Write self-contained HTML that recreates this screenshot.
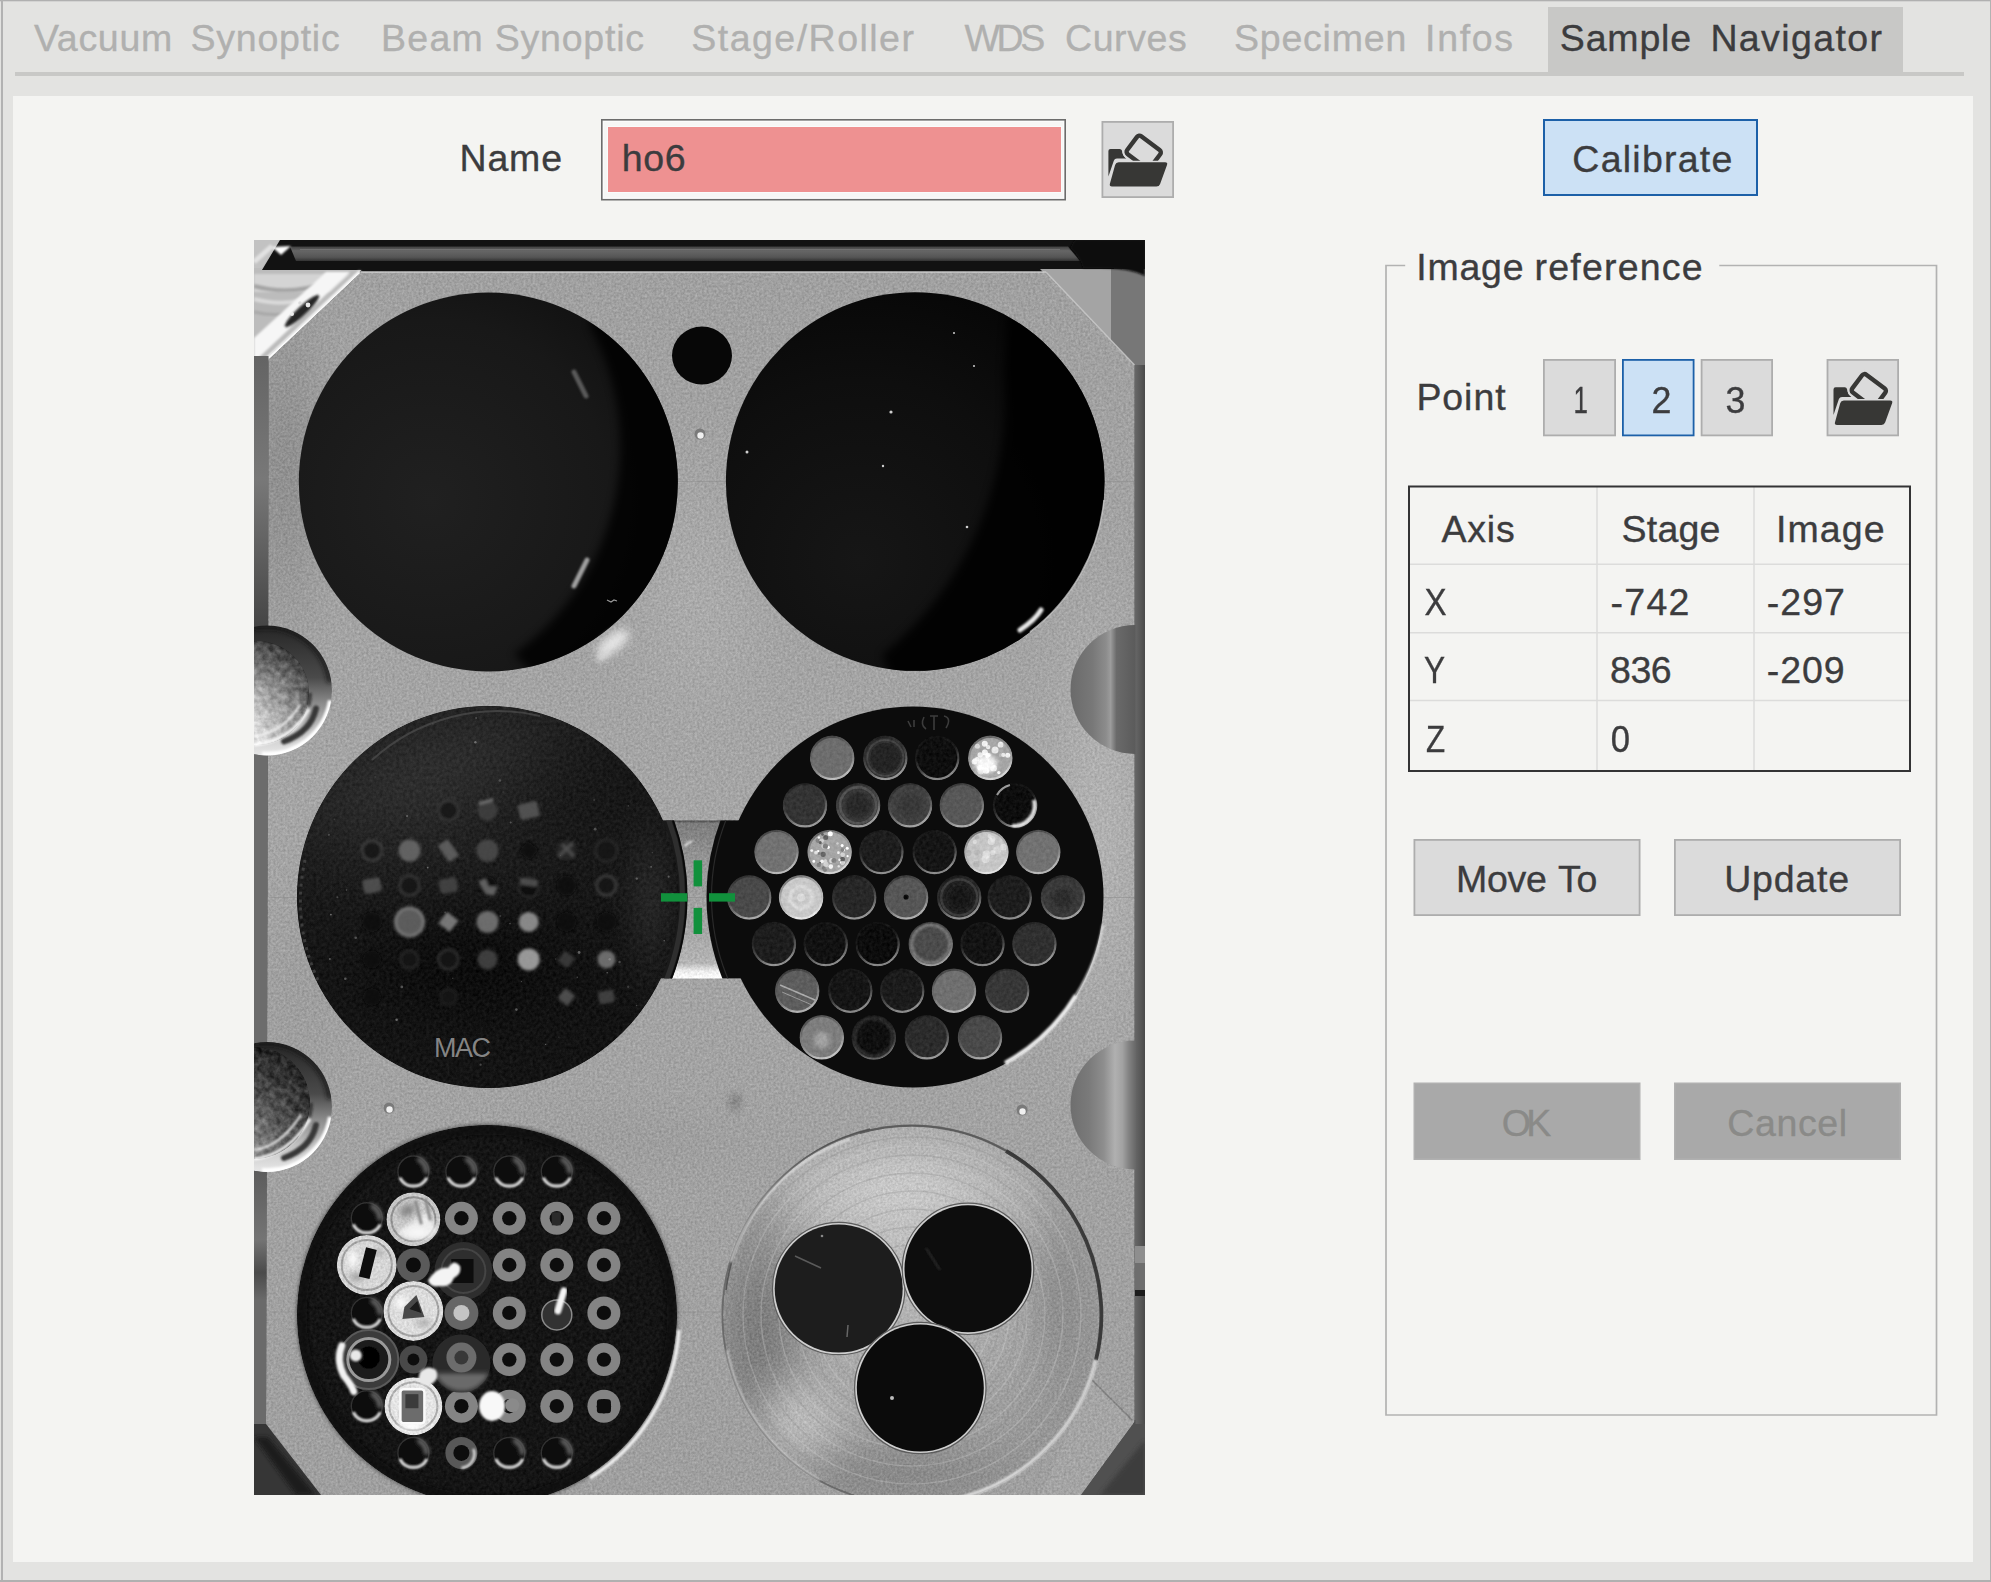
<!DOCTYPE html>
<html lang="en"><head><meta charset="utf-8"><title>Sample Navigator</title>
<style>
html,body{margin:0;padding:0;width:1991px;height:1582px;overflow:hidden;background:#e3e3e1}
#ui{position:absolute;left:0;top:0;width:1991px;height:1582px}
.t{position:absolute;font:37.5px/37.5px "Liberation Sans",sans-serif;white-space:pre;-webkit-text-stroke:.35px currentColor}
#photo{position:absolute;left:254px;top:240px;width:891px;height:1255px}
</style></head><body>
<svg id="ui" viewBox="0 0 1991 1582" width="1991" height="1582">
<rect x="0.00" y="0.00" width="1991.00" height="1582.00" fill="#e3e3e1"/>
<rect x="0.00" y="0.00" width="1991.00" height="1.30" fill="#b0b0b0"/>
<rect x="1.00" y="0.00" width="2.00" height="1582.00" fill="#b2b2b2"/>
<rect x="1990.00" y="0.00" width="1.00" height="1582.00" fill="#b2b2b2"/>
<rect x="0.00" y="1580.00" width="1991.00" height="2.00" fill="#b0b0b0"/>
<rect x="15.00" y="72.00" width="1949.00" height="4.00" fill="#c8c8c6"/>
<rect x="1548.00" y="7.00" width="355.00" height="69.00" fill="#c8c8c6"/>
<rect x="13.00" y="96.00" width="1960.00" height="1466.00" fill="#f4f4f2"/>
<rect x="601.80" y="119.80" width="463.40" height="79.90" fill="#f6f6f5" stroke="#6c6c6c" stroke-width="1.6"/>
<rect x="603.50" y="121.50" width="460.00" height="76.50" fill="none" stroke="#fbfbfb" stroke-width="1"/>
<rect x="607.00" y="126.00" width="455.00" height="67.00" fill="#f9fbfb"/>
<rect x="608.00" y="127.00" width="453.00" height="65.00" fill="#ee9191"/>
<rect x="1102.40" y="121.90" width="70.70" height="75.20" fill="#dbdbdb" stroke="#adadad" stroke-width="1.8"/>
<g transform="translate(1101.50,121.00)">
<path d="M6.9 30q0-2.1 2.1-2.1h9.2q1.7 0 2.2 1.6l1.2 4q.6 2 2.4 3.2l1 .8h-9.6q-2.3 0-3.1 2.2l-5.4 15.8z" fill="#373735"/>
<g transform="translate(36.9,10.4) rotate(36.9)" fill="none">
<rect x="2.2" y="2.2" width="29" height="22.4" rx="3" stroke="#dbdbdb" stroke-width="8.6"/>
<rect x="2.2" y="2.2" width="29" height="22.4" rx="3" stroke="#373735" stroke-width="4.4"/>
</g>
<path d="M17.2 41.2h46.4q2.9 0 1.9 2.7l-6.9 19q-.9 2.6-3.7 2.6h-44.4q-2.9 0-2.1-2.7l5.2-18.9q.8-2.7 3.6-2.7z" fill="#373735" stroke="#dbdbdb" stroke-width="3" paint-order="stroke"/>
</g>
<rect x="1544.00" y="120.00" width="213.00" height="75.00" fill="#cce1f5" stroke="#1c60a8" stroke-width="2"/>
<rect x="1543.90" y="359.90" width="71.20" height="75.50" fill="#dbdbdb" stroke="#adadad" stroke-width="1.8"/>
<rect x="1622.90" y="359.90" width="70.70" height="75.50" fill="#cce1f5" stroke="#1c60a8" stroke-width="1.8"/>
<rect x="1701.60" y="359.90" width="70.50" height="75.50" fill="#dbdbdb" stroke="#adadad" stroke-width="1.8"/>
<rect x="1827.50" y="359.90" width="70.60" height="75.50" fill="#dbdbdb" stroke="#adadad" stroke-width="1.8"/>
<g transform="translate(1826.60,359.40)">
<path d="M6.9 30q0-2.1 2.1-2.1h9.2q1.7 0 2.2 1.6l1.2 4q.6 2 2.4 3.2l1 .8h-9.6q-2.3 0-3.1 2.2l-5.4 15.8z" fill="#373735"/>
<g transform="translate(36.9,10.4) rotate(36.9)" fill="none">
<rect x="2.2" y="2.2" width="29" height="22.4" rx="3" stroke="#dbdbdb" stroke-width="8.6"/>
<rect x="2.2" y="2.2" width="29" height="22.4" rx="3" stroke="#373735" stroke-width="4.4"/>
</g>
<path d="M17.2 41.2h46.4q2.9 0 1.9 2.7l-6.9 19q-.9 2.6-3.7 2.6h-44.4q-2.9 0-2.1-2.7l5.2-18.9q.8-2.7 3.6-2.7z" fill="#373735" stroke="#dbdbdb" stroke-width="3" paint-order="stroke"/>
</g>
<rect x="1414.40" y="839.90" width="225.20" height="75.20" fill="#dbdbdb" stroke="#adadad" stroke-width="1.8"/>
<rect x="1674.90" y="839.90" width="225.20" height="75.20" fill="#dbdbdb" stroke="#adadad" stroke-width="1.8"/>
<rect x="1414.25" y="1083.25" width="225.50" height="76.00" fill="#a9a9a9" stroke="#b0b0b0" stroke-width="1.5"/>
<rect x="1674.75" y="1083.25" width="225.50" height="76.00" fill="#a9a9a9" stroke="#b0b0b0" stroke-width="1.5"/>
<path d="M1405.2 265.5H1386V1415H1936.5V265.5H1719.3" fill="none" stroke="#b2b2b2" stroke-width="1.7"/>
<path d="M1597 487V771" stroke="#dcdcdb" stroke-width="1.5"/>
<path d="M1754 487V771" stroke="#dcdcdb" stroke-width="1.5"/>
<path d="M1409 564.3H1910" stroke="#dcdcdb" stroke-width="1.5"/>
<path d="M1409 632.8H1910" stroke="#dcdcdb" stroke-width="1.5"/>
<path d="M1409 700.6H1910" stroke="#dcdcdb" stroke-width="1.5"/>
<rect x="1409.00" y="486.50" width="501.00" height="284.50" fill="none" stroke="#333335" stroke-width="2"/>
</svg>
<svg id="photo" viewBox="254 240 891 1255" width="891" height="1255">
<defs><filter id="grain" x="0" y="0" width="100%" height="100%" color-interpolation-filters="sRGB">
<feTurbulence type="fractalNoise" baseFrequency="0.42" numOctaves="2" seed="4" result="n"/>
<feColorMatrix in="n" type="matrix" values="1 0 0 0 0 1 0 0 0 0 1 0 0 0 0 0 0 0 0 1" result="gn"/>
<feComposite in="SourceGraphic" in2="gn" operator="arithmetic" k1="0" k2="1" k3="0.20" k4="-0.10" result="c"/>
<feComposite in="c" in2="SourceGraphic" operator="in"/>
</filter>
<filter id="grain2" x="0" y="0" width="100%" height="100%" color-interpolation-filters="sRGB">
<feTurbulence type="fractalNoise" baseFrequency="0.3" numOctaves="3" seed="9" result="n"/>
<feColorMatrix in="n" type="matrix" values="1 0 0 0 0 1 0 0 0 0 1 0 0 0 0 0 0 0 0 1" result="gn"/>
<feComposite in="SourceGraphic" in2="gn" operator="arithmetic" k1="0" k2="1" k3="0.12" k4="-0.055" result="c"/>
<feComposite in="c" in2="SourceGraphic" operator="in"/>
</filter>
<filter id="b1" x="-50%" y="-50%" width="200%" height="200%"><feGaussianBlur stdDeviation="1"/></filter>
<filter id="b06" x="-5%" y="-5%" width="110%" height="110%"><feGaussianBlur stdDeviation="0.6"/></filter>
<filter id="b15" x="-50%" y="-50%" width="200%" height="200%"><feGaussianBlur stdDeviation="1.5"/></filter>
<filter id="b2" x="-50%" y="-50%" width="200%" height="200%"><feGaussianBlur stdDeviation="2"/></filter>
<filter id="b4" x="-50%" y="-50%" width="200%" height="200%"><feGaussianBlur stdDeviation="4"/></filter>
<filter id="b8" x="-100%" y="-100%" width="300%" height="300%"><feGaussianBlur stdDeviation="8"/></filter>
<filter id="b16" x="-150%" y="-150%" width="400%" height="400%"><feGaussianBlur stdDeviation="16"/></filter>
<linearGradient id="plateG" x1="0" y1="0" x2="0" y2="1">
<stop offset="0" stop-color="#a0a0a0"/><stop offset="0.45" stop-color="#a5a5a5"/><stop offset="1" stop-color="#9f9f9f"/></linearGradient>
<linearGradient id="lstrip" x1="0" y1="358" x2="0" y2="1424" gradientUnits="userSpaceOnUse">
<stop offset="0" stop-color="#646464"/><stop offset="0.114" stop-color="#787878"/><stop offset="0.19" stop-color="#5c5c5c"/><stop offset="0.25" stop-color="#464646"/>
<stop offset="0.373" stop-color="#6c6c6c"/><stop offset="0.64" stop-color="#6c6c6c"/><stop offset="0.762" stop-color="#5c5c5c"/><stop offset="0.827" stop-color="#747474"/>
<stop offset="0.858" stop-color="#4a4a4a"/><stop offset="0.884" stop-color="#6a6a6a"/><stop offset="1" stop-color="#6a6a6a"/></linearGradient>
<linearGradient id="rimG" x1="0" y1="0" x2="0.35" y2="1">
<stop offset="0" stop-color="#000" stop-opacity=".55"/><stop offset="0.45" stop-color="#444" stop-opacity=".2"/><stop offset="1" stop-color="#fff" stop-opacity=".5"/></linearGradient>
<linearGradient id="slotG" x1="0" y1="820" x2="0" y2="979" gradientUnits="userSpaceOnUse">
<stop offset="0" stop-color="#404040"/><stop offset="0.02" stop-color="#7c7c7c"/><stop offset="0.3" stop-color="#9a9a9a"/><stop offset="0.7" stop-color="#a6a6a6"/><stop offset="0.9" stop-color="#b4b4b4"/><stop offset="0.95" stop-color="#ececec"/><stop offset="1" stop-color="#ffffff"/></linearGradient>
<linearGradient id="notchG" x1="0" y1="0" x2="0" y2="1">
<stop offset="0" stop-color="#262626"/><stop offset="0.4" stop-color="#4a4a4a"/><stop offset="0.6" stop-color="#8c8c8c"/><stop offset="0.8" stop-color="#c4c4c4"/><stop offset="1" stop-color="#e8e8e8"/></linearGradient>
<radialGradient id="headG0" cx="0.22" cy="0.98" r="1.15">
<stop offset="0" stop-color="#ffffff"/><stop offset="0.2" stop-color="#ececec"/><stop offset="0.4" stop-color="#bcbcbc"/><stop offset="0.6" stop-color="#909090"/><stop offset="0.8" stop-color="#5c5c5c"/><stop offset="0.92" stop-color="#383838"/><stop offset="1" stop-color="#2a2a2a"/></radialGradient>
<radialGradient id="headG1" cx="0.2" cy="1.0" r="1.15">
<stop offset="0" stop-color="#f4f4f4"/><stop offset="0.12" stop-color="#c8c8c8"/><stop offset="0.28" stop-color="#868686"/><stop offset="0.5" stop-color="#5c5c5c"/><stop offset="0.75" stop-color="#3a3a3a"/><stop offset="1" stop-color="#1c1c1c"/></radialGradient>
<filter id="grain3" x="0" y="0" width="100%" height="100%" color-interpolation-filters="sRGB">
<feTurbulence type="fractalNoise" baseFrequency="0.16" numOctaves="3" seed="21" result="n"/>
<feColorMatrix in="n" type="matrix" values="1 0 0 0 0 1 0 0 0 0 1 0 0 0 0 0 0 0 0 1" result="gn"/>
<feComposite in="SourceGraphic" in2="gn" operator="arithmetic" k1="0" k2="1" k3="0.36" k4="-0.18" result="c"/>
<feComposite in="c" in2="SourceGraphic" operator="in"/>
</filter>
<linearGradient id="rstrip" x1="1134" y1="0" x2="1145" y2="0" gradientUnits="userSpaceOnUse">
<stop offset="0" stop-color="#6a6a6a"/><stop offset="0.6" stop-color="#585858"/><stop offset="1" stop-color="#4a4a4a"/></linearGradient>
<linearGradient id="stripe" x1="0" y1="246" x2="0" y2="262" gradientUnits="userSpaceOnUse">
<stop offset="0" stop-color="#3a3a3a"/><stop offset="0.3" stop-color="#666"/><stop offset="0.7" stop-color="#555"/><stop offset="1" stop-color="#2a2a2a"/></linearGradient>
<linearGradient id="tl" x1="254" y1="300" x2="330" y2="350" gradientUnits="userSpaceOnUse">
<stop offset="0" stop-color="#c0c0c0"/><stop offset="0.45" stop-color="#d8d8d8"/><stop offset="0.7" stop-color="#ffffff"/><stop offset="1" stop-color="#e8e8e8"/></linearGradient>
<linearGradient id="cyl" x1="1070" y1="0" x2="1145" y2="0" gradientUnits="userSpaceOnUse">
<stop offset="0" stop-color="#6a6a6a"/><stop offset="0.3" stop-color="#787878"/><stop offset="0.48" stop-color="#8c8c8c"/><stop offset="0.54" stop-color="#9c9c9c"/><stop offset="0.62" stop-color="#6a6a6a"/><stop offset="0.85" stop-color="#5c5c5c"/><stop offset="1" stop-color="#555"/></linearGradient>
<linearGradient id="cyl2" x1="1070" y1="0" x2="1145" y2="0" gradientUnits="userSpaceOnUse">
<stop offset="0" stop-color="#6e6e6e"/><stop offset="0.25" stop-color="#7a7a7a"/><stop offset="0.45" stop-color="#8e8e8e"/><stop offset="0.6" stop-color="#b0b0b0"/><stop offset="0.7" stop-color="#a2a2a2"/><stop offset="0.78" stop-color="#848484"/><stop offset="0.86" stop-color="#6c6c6c"/><stop offset="1" stop-color="#5c5c5c"/></linearGradient>
<radialGradient id="hole1" cx="430" cy="500" r="300" gradientUnits="userSpaceOnUse">
<stop offset="0" stop-color="#202020"/><stop offset="0.6" stop-color="#181818"/><stop offset="1" stop-color="#0c0c0c"/></radialGradient>
<radialGradient id="hole2" cx="860" cy="560" r="300" gradientUnits="userSpaceOnUse">
<stop offset="0" stop-color="#161616"/><stop offset="0.6" stop-color="#0e0e0e"/><stop offset="1" stop-color="#060606"/></radialGradient>
<radialGradient id="disk3" cx="420" cy="800" r="330" gradientUnits="userSpaceOnUse">
<stop offset="0" stop-color="#222222"/><stop offset="0.45" stop-color="#181818"/><stop offset="1" stop-color="#111111"/></radialGradient>
<radialGradient id="metal" cx="900" cy="1240" r="230" gradientUnits="userSpaceOnUse">
<stop offset="0" stop-color="#bcbcbc"/><stop offset="0.5" stop-color="#acacac"/><stop offset="0.8" stop-color="#a0a0a0"/><stop offset="1" stop-color="#989898"/></radialGradient>
<radialGradient id="screwA" cx="0.3" cy="0.85" r="0.95">
<stop offset="0" stop-color="#ffffff"/><stop offset="0.2" stop-color="#d0d0d0"/><stop offset="0.5" stop-color="#8a8a8a"/><stop offset="0.8" stop-color="#5a5a5a"/><stop offset="1" stop-color="#303030"/></radialGradient>
<radialGradient id="screwB" cx="0.3" cy="0.35" r="0.9">
<stop offset="0" stop-color="#8a8a8a"/><stop offset="0.5" stop-color="#5e5e5e"/><stop offset="1" stop-color="#2c2c2c"/></radialGradient>
<clipPath id="pc"><rect x="254" y="240" width="891" height="1255"/></clipPath>
<clipPath id="plateclip"><path d="M361.5 271.5H1046L1134.5 365V1422L1081 1495H321L266 1424L269 359Z"/></clipPath>
<clipPath id="slotL"><rect x="640" y="820.5" width="57" height="158"/></clipPath>
<clipPath id="slotR"><rect x="698" y="820.5" width="60" height="158"/></clipPath>
<clipPath id="h5"><circle cx="487" cy="1315" r="190"/></clipPath>
<clipPath id="h4"><circle cx="913" cy="897" r="190.5"/></clipPath>
<clipPath id="h1"><circle cx="488.3" cy="482" r="189.5"/></clipPath>
<clipPath id="h2"><circle cx="915.2" cy="481.5" r="189.3"/></clipPath>
<clipPath id="h3"><circle cx="488" cy="897" r="191"/></clipPath>
<radialGradient id="sg1"><stop offset="0" stop-color="#adadad" stop-opacity="0.700"/><stop offset="0.15" stop-color="#adadad" stop-opacity="0.649"/><stop offset="0.3" stop-color="#adadad" stop-opacity="0.517"/><stop offset="0.45" stop-color="#adadad" stop-opacity="0.352"/><stop offset="0.6" stop-color="#adadad" stop-opacity="0.201"/><stop offset="0.75" stop-color="#adadad" stop-opacity="0.091"/><stop offset="0.9" stop-color="#adadad" stop-opacity="0.025"/><stop offset="1" stop-color="#adadad" stop-opacity="0.000"/></radialGradient>
<radialGradient id="sg2"><stop offset="0" stop-color="#9a9a9a" stop-opacity="0.500"/><stop offset="0.15" stop-color="#9a9a9a" stop-opacity="0.464"/><stop offset="0.3" stop-color="#9a9a9a" stop-opacity="0.370"/><stop offset="0.45" stop-color="#9a9a9a" stop-opacity="0.251"/><stop offset="0.6" stop-color="#9a9a9a" stop-opacity="0.143"/><stop offset="0.75" stop-color="#9a9a9a" stop-opacity="0.065"/><stop offset="0.9" stop-color="#9a9a9a" stop-opacity="0.018"/><stop offset="1" stop-color="#9a9a9a" stop-opacity="0.000"/></radialGradient>
<radialGradient id="sg3"><stop offset="0" stop-color="#b6b6b6" stop-opacity="0.700"/><stop offset="0.15" stop-color="#b6b6b6" stop-opacity="0.649"/><stop offset="0.3" stop-color="#b6b6b6" stop-opacity="0.517"/><stop offset="0.45" stop-color="#b6b6b6" stop-opacity="0.352"/><stop offset="0.6" stop-color="#b6b6b6" stop-opacity="0.201"/><stop offset="0.75" stop-color="#b6b6b6" stop-opacity="0.091"/><stop offset="0.9" stop-color="#b6b6b6" stop-opacity="0.025"/><stop offset="1" stop-color="#b6b6b6" stop-opacity="0.000"/></radialGradient>
<radialGradient id="sg4"><stop offset="0" stop-color="#9a9a9a" stop-opacity="0.600"/><stop offset="0.15" stop-color="#9a9a9a" stop-opacity="0.557"/><stop offset="0.3" stop-color="#9a9a9a" stop-opacity="0.443"/><stop offset="0.45" stop-color="#9a9a9a" stop-opacity="0.302"/><stop offset="0.6" stop-color="#9a9a9a" stop-opacity="0.172"/><stop offset="0.75" stop-color="#9a9a9a" stop-opacity="0.078"/><stop offset="0.9" stop-color="#9a9a9a" stop-opacity="0.021"/><stop offset="1" stop-color="#9a9a9a" stop-opacity="0.000"/></radialGradient>
<radialGradient id="sg5"><stop offset="0" stop-color="#8a8a8a" stop-opacity="0.750"/><stop offset="0.15" stop-color="#8a8a8a" stop-opacity="0.696"/><stop offset="0.3" stop-color="#8a8a8a" stop-opacity="0.554"/><stop offset="0.45" stop-color="#8a8a8a" stop-opacity="0.377"/><stop offset="0.6" stop-color="#8a8a8a" stop-opacity="0.215"/><stop offset="0.75" stop-color="#8a8a8a" stop-opacity="0.097"/><stop offset="0.9" stop-color="#8a8a8a" stop-opacity="0.027"/><stop offset="1" stop-color="#8a8a8a" stop-opacity="0.000"/></radialGradient>
<radialGradient id="sg6"><stop offset="0" stop-color="#7c7c7c" stop-opacity="0.700"/><stop offset="0.15" stop-color="#7c7c7c" stop-opacity="0.649"/><stop offset="0.3" stop-color="#7c7c7c" stop-opacity="0.517"/><stop offset="0.45" stop-color="#7c7c7c" stop-opacity="0.352"/><stop offset="0.6" stop-color="#7c7c7c" stop-opacity="0.201"/><stop offset="0.75" stop-color="#7c7c7c" stop-opacity="0.091"/><stop offset="0.9" stop-color="#7c7c7c" stop-opacity="0.025"/><stop offset="1" stop-color="#7c7c7c" stop-opacity="0.000"/></radialGradient>
<clipPath id="nc0"><circle cx="267" cy="690.5" r="65"/></clipPath>
<clipPath id="nc1"><circle cx="267" cy="1107" r="65"/></clipPath>
<radialGradient id="sg7"><stop offset="0" stop-color="#303030" stop-opacity="0.750"/><stop offset="0.15" stop-color="#303030" stop-opacity="0.696"/><stop offset="0.3" stop-color="#303030" stop-opacity="0.554"/><stop offset="0.45" stop-color="#303030" stop-opacity="0.377"/><stop offset="0.6" stop-color="#303030" stop-opacity="0.215"/><stop offset="0.75" stop-color="#303030" stop-opacity="0.097"/><stop offset="0.9" stop-color="#303030" stop-opacity="0.027"/><stop offset="1" stop-color="#303030" stop-opacity="0.000"/></radialGradient>
<radialGradient id="sg8"><stop offset="0" stop-color="#090909" stop-opacity="0.850"/><stop offset="0.15" stop-color="#090909" stop-opacity="0.788"/><stop offset="0.3" stop-color="#090909" stop-opacity="0.628"/><stop offset="0.45" stop-color="#090909" stop-opacity="0.427"/><stop offset="0.6" stop-color="#090909" stop-opacity="0.244"/><stop offset="0.75" stop-color="#090909" stop-opacity="0.110"/><stop offset="0.9" stop-color="#090909" stop-opacity="0.030"/><stop offset="1" stop-color="#090909" stop-opacity="0.000"/></radialGradient>
<radialGradient id="sg9"><stop offset="0" stop-color="#2a2a2a" stop-opacity="0.700"/><stop offset="0.15" stop-color="#2a2a2a" stop-opacity="0.649"/><stop offset="0.3" stop-color="#2a2a2a" stop-opacity="0.517"/><stop offset="0.45" stop-color="#2a2a2a" stop-opacity="0.352"/><stop offset="0.6" stop-color="#2a2a2a" stop-opacity="0.201"/><stop offset="0.75" stop-color="#2a2a2a" stop-opacity="0.091"/><stop offset="0.9" stop-color="#2a2a2a" stop-opacity="0.025"/><stop offset="1" stop-color="#2a2a2a" stop-opacity="0.000"/></radialGradient>
<radialGradient id="sg10"><stop offset="0" stop-color="#7a7a7a" stop-opacity="0.800"/><stop offset="0.15" stop-color="#7a7a7a" stop-opacity="0.742"/><stop offset="0.3" stop-color="#7a7a7a" stop-opacity="0.591"/><stop offset="0.45" stop-color="#7a7a7a" stop-opacity="0.402"/><stop offset="0.6" stop-color="#7a7a7a" stop-opacity="0.230"/><stop offset="0.75" stop-color="#7a7a7a" stop-opacity="0.104"/><stop offset="0.9" stop-color="#7a7a7a" stop-opacity="0.028"/><stop offset="1" stop-color="#7a7a7a" stop-opacity="0.000"/></radialGradient>
<radialGradient id="sg11"><stop offset="0" stop-color="#ffffff" stop-opacity="0.900"/><stop offset="0.15" stop-color="#ffffff" stop-opacity="0.835"/><stop offset="0.3" stop-color="#ffffff" stop-opacity="0.665"/><stop offset="0.45" stop-color="#ffffff" stop-opacity="0.453"/><stop offset="0.6" stop-color="#ffffff" stop-opacity="0.258"/><stop offset="0.75" stop-color="#ffffff" stop-opacity="0.117"/><stop offset="0.9" stop-color="#ffffff" stop-opacity="0.032"/><stop offset="1" stop-color="#ffffff" stop-opacity="0.000"/></radialGradient>
<radialGradient id="sg12"><stop offset="0" stop-color="#9a9a9a" stop-opacity="0.700"/><stop offset="0.15" stop-color="#9a9a9a" stop-opacity="0.649"/><stop offset="0.3" stop-color="#9a9a9a" stop-opacity="0.517"/><stop offset="0.45" stop-color="#9a9a9a" stop-opacity="0.352"/><stop offset="0.6" stop-color="#9a9a9a" stop-opacity="0.201"/><stop offset="0.75" stop-color="#9a9a9a" stop-opacity="0.091"/><stop offset="0.9" stop-color="#9a9a9a" stop-opacity="0.025"/><stop offset="1" stop-color="#9a9a9a" stop-opacity="0.000"/></radialGradient>
<radialGradient id="sg13"><stop offset="0" stop-color="#a8a8a8" stop-opacity="0.600"/><stop offset="0.15" stop-color="#a8a8a8" stop-opacity="0.557"/><stop offset="0.3" stop-color="#a8a8a8" stop-opacity="0.443"/><stop offset="0.45" stop-color="#a8a8a8" stop-opacity="0.302"/><stop offset="0.6" stop-color="#a8a8a8" stop-opacity="0.172"/><stop offset="0.75" stop-color="#a8a8a8" stop-opacity="0.078"/><stop offset="0.9" stop-color="#a8a8a8" stop-opacity="0.021"/><stop offset="1" stop-color="#a8a8a8" stop-opacity="0.000"/></radialGradient>
<radialGradient id="sg14"><stop offset="0" stop-color="#ffffff" stop-opacity="0.800"/><stop offset="0.15" stop-color="#ffffff" stop-opacity="0.742"/><stop offset="0.3" stop-color="#ffffff" stop-opacity="0.591"/><stop offset="0.45" stop-color="#ffffff" stop-opacity="0.402"/><stop offset="0.6" stop-color="#ffffff" stop-opacity="0.230"/><stop offset="0.75" stop-color="#ffffff" stop-opacity="0.104"/><stop offset="0.9" stop-color="#ffffff" stop-opacity="0.028"/><stop offset="1" stop-color="#ffffff" stop-opacity="0.000"/></radialGradient>
<radialGradient id="sg15"><stop offset="0" stop-color="#a0a0a0" stop-opacity="0.600"/><stop offset="0.15" stop-color="#a0a0a0" stop-opacity="0.557"/><stop offset="0.3" stop-color="#a0a0a0" stop-opacity="0.443"/><stop offset="0.45" stop-color="#a0a0a0" stop-opacity="0.302"/><stop offset="0.6" stop-color="#a0a0a0" stop-opacity="0.172"/><stop offset="0.75" stop-color="#a0a0a0" stop-opacity="0.078"/><stop offset="0.9" stop-color="#a0a0a0" stop-opacity="0.021"/><stop offset="1" stop-color="#a0a0a0" stop-opacity="0.000"/></radialGradient>
<radialGradient id="sg16"><stop offset="0" stop-color="#ffffff" stop-opacity="0.800"/><stop offset="0.15" stop-color="#ffffff" stop-opacity="0.742"/><stop offset="0.3" stop-color="#ffffff" stop-opacity="0.591"/><stop offset="0.45" stop-color="#ffffff" stop-opacity="0.402"/><stop offset="0.6" stop-color="#ffffff" stop-opacity="0.230"/><stop offset="0.75" stop-color="#ffffff" stop-opacity="0.104"/><stop offset="0.9" stop-color="#ffffff" stop-opacity="0.028"/><stop offset="1" stop-color="#ffffff" stop-opacity="0.000"/></radialGradient>
<radialGradient id="sg17"><stop offset="0" stop-color="#ffffff" stop-opacity="0.900"/><stop offset="0.15" stop-color="#ffffff" stop-opacity="0.835"/><stop offset="0.3" stop-color="#ffffff" stop-opacity="0.665"/><stop offset="0.45" stop-color="#ffffff" stop-opacity="0.453"/><stop offset="0.6" stop-color="#ffffff" stop-opacity="0.258"/><stop offset="0.75" stop-color="#ffffff" stop-opacity="0.117"/><stop offset="0.9" stop-color="#ffffff" stop-opacity="0.032"/><stop offset="1" stop-color="#ffffff" stop-opacity="0.000"/></radialGradient>
<radialGradient id="sg18"><stop offset="0" stop-color="#787878" stop-opacity="0.900"/><stop offset="0.15" stop-color="#787878" stop-opacity="0.835"/><stop offset="0.3" stop-color="#787878" stop-opacity="0.665"/><stop offset="0.45" stop-color="#787878" stop-opacity="0.453"/><stop offset="0.6" stop-color="#787878" stop-opacity="0.258"/><stop offset="0.75" stop-color="#787878" stop-opacity="0.117"/><stop offset="0.9" stop-color="#787878" stop-opacity="0.032"/><stop offset="1" stop-color="#787878" stop-opacity="0.000"/></radialGradient>
<radialGradient id="sg19"><stop offset="0" stop-color="#868686" stop-opacity="0.800"/><stop offset="0.15" stop-color="#868686" stop-opacity="0.742"/><stop offset="0.3" stop-color="#868686" stop-opacity="0.591"/><stop offset="0.45" stop-color="#868686" stop-opacity="0.402"/><stop offset="0.6" stop-color="#868686" stop-opacity="0.230"/><stop offset="0.75" stop-color="#868686" stop-opacity="0.104"/><stop offset="0.9" stop-color="#868686" stop-opacity="0.028"/><stop offset="1" stop-color="#868686" stop-opacity="0.000"/></radialGradient>
<radialGradient id="sg20"><stop offset="0" stop-color="#8a8a8a" stop-opacity="0.800"/><stop offset="0.15" stop-color="#8a8a8a" stop-opacity="0.742"/><stop offset="0.3" stop-color="#8a8a8a" stop-opacity="0.591"/><stop offset="0.45" stop-color="#8a8a8a" stop-opacity="0.402"/><stop offset="0.6" stop-color="#8a8a8a" stop-opacity="0.230"/><stop offset="0.75" stop-color="#8a8a8a" stop-opacity="0.104"/><stop offset="0.9" stop-color="#8a8a8a" stop-opacity="0.028"/><stop offset="1" stop-color="#8a8a8a" stop-opacity="0.000"/></radialGradient>
<radialGradient id="sg21"><stop offset="0" stop-color="#cccccc" stop-opacity="0.800"/><stop offset="0.15" stop-color="#cccccc" stop-opacity="0.742"/><stop offset="0.3" stop-color="#cccccc" stop-opacity="0.591"/><stop offset="0.45" stop-color="#cccccc" stop-opacity="0.402"/><stop offset="0.6" stop-color="#cccccc" stop-opacity="0.230"/><stop offset="0.75" stop-color="#cccccc" stop-opacity="0.104"/><stop offset="0.9" stop-color="#cccccc" stop-opacity="0.028"/><stop offset="1" stop-color="#cccccc" stop-opacity="0.000"/></radialGradient>
<radialGradient id="sg22"><stop offset="0" stop-color="#c0c0c0" stop-opacity="0.800"/><stop offset="0.15" stop-color="#c0c0c0" stop-opacity="0.742"/><stop offset="0.3" stop-color="#c0c0c0" stop-opacity="0.591"/><stop offset="0.45" stop-color="#c0c0c0" stop-opacity="0.402"/><stop offset="0.6" stop-color="#c0c0c0" stop-opacity="0.230"/><stop offset="0.75" stop-color="#c0c0c0" stop-opacity="0.104"/><stop offset="0.9" stop-color="#c0c0c0" stop-opacity="0.028"/><stop offset="1" stop-color="#c0c0c0" stop-opacity="0.000"/></radialGradient></defs>
<rect x="254" y="240" width="891" height="1255" fill="#808080"/>
<rect x="254" y="240" width="891" height="33" fill="#121212"/>
<path d="M290 246.5H1068L1080 261H296Z" fill="url(#stripe)"/>
<path d="M300 249.5H1060" stroke="#7a7a7a" stroke-width="1.2" opacity=".7"/>
<path d="M254 240H280L262 270H361.5L268.5 356H254Z" fill="#bcbcbc"/>
<path d="M254 274H350L330 292H254Z" fill="#d4d4d4" filter="url(#b1)"/>
<path d="M254 286Q290 296 326 283" stroke="#a4a4a4" stroke-width="4" fill="none" filter="url(#b1)"/>
<path d="M254 299Q288 308 314 295" stroke="#dadada" stroke-width="4" fill="none" filter="url(#b1)"/>
<path d="M254 312Q280 318 300 310" stroke="#a8a8a8" stroke-width="3" fill="none" filter="url(#b1)"/>
<path d="M350 272L254 362V338L326 272Z" fill="#f6f6f6" filter="url(#b1)"/>
<path d="M361 272L268 359" stroke="#ffffff" stroke-width="5" filter="url(#b1)"/>
<path d="M254 240H279L262 268H254Z" fill="#c2c2c2"/>
<path d="M254 262L272 246" stroke="#e2e2e2" stroke-width="5" filter="url(#b1)"/>
<path d="M272 247L291 246L281 255Z" fill="#fff" filter="url(#b1)"/>
<ellipse cx="302" cy="311" rx="23" ry="4.6" transform="rotate(-43 302 311)" fill="#262626" filter="url(#b1)"/>
<circle cx="292" cy="314" r="2" fill="#eee"/><circle cx="308" cy="305" r="2.4" fill="#e8e8e8"/><circle cx="300" cy="303" r="1.8" fill="#ddd"/>
<path d="M1040 269H1145V366H1134.5Z" fill="#a4a4a4"/>
<path d="M1111 269H1145V366H1134.5L1111 341Z" fill="#777"/>
<path d="M1134.5 365V1424H1145V365Z" fill="url(#rstrip)"/>
<path d="M1075 240H1145V276Q1130 268 1100 268H1083Q1080 256 1070 248Z" fill="#0e0e0e" filter="url(#b1)"/>
<rect x="254" y="356" width="14.5" height="1081" fill="url(#lstrip)"/>
<path d="M254 1424H266L321 1495H254Z" fill="#363636"/>
<path d="M254 1437H268L316 1495H296Z" fill="#1e1e1e" filter="url(#b2)"/>
<path d="M1134.5 1420L1081 1495H1145V1420Z" fill="#505050"/>
<path d="M1145 1440L1100 1495H1145Z" fill="#3c3c3c" filter="url(#b2)"/>
<g filter="url(#grain)">
<path d="M361.5 271.5H1046L1134.5 365V1422L1081 1495H321L266 1424L269 359Z" fill="url(#plateG)"/>
<g clip-path="url(#plateclip)">
<ellipse cx="700" cy="600" rx="110" ry="200" fill="url(#sg1)"/>
<ellipse cx="640" cy="1140" rx="200" ry="60" fill="url(#sg2)"/>
<ellipse cx="1100" cy="820" rx="80" ry="330" fill="url(#sg3)"/>
<ellipse cx="300" cy="1000" rx="80" ry="180" fill="url(#sg4)"/>
<ellipse cx="285" cy="470" rx="70" ry="260" fill="url(#sg5)"/>
<ellipse cx="735" cy="1102" rx="14" ry="18" fill="url(#sg6)"/>
<path d="M1092 1380L1134.5 1422L1081 1495H1040Z" fill="#acacac" opacity=".4"/>
<path d="M1092 1380L1132 1420" stroke="#7c7c7c" stroke-width="1.6" opacity=".9"/>
</g>
<rect x="655" y="820.5" width="90" height="158" fill="url(#slotG)"/>
</g>
<path d="M659 820.8H741" stroke="#151515" stroke-width="2.2" filter="url(#b1)"/>
<path d="M697.5 880V915" stroke="#e0e0e0" stroke-width="3" filter="url(#b1)" opacity=".7"/>
<path d="M684 846l8-5" stroke="#eee" stroke-width="2" filter="url(#b1)"/>
<path d="M361 272H1046" stroke="#d8d8d8" stroke-width="1.6" opacity=".8"/>
<path d="M1046 272L1134.5 365" stroke="#cfcfcf" stroke-width="1.3" opacity=".8"/>
<path d="M269 481.5H1134" stroke="#8e8e8e" stroke-width="1" opacity=".55"/>
<path d="M269 897.5H1134" stroke="#8e8e8e" stroke-width="1" opacity=".55"/>
<path d="M269 1312H1134" stroke="#8e8e8e" stroke-width="1" opacity=".55"/>
<g clip-path="url(#pc)"><g clip-path="url(#nc0)">
<circle cx="267" cy="690.5" r="65" fill="url(#notchG)"/>
<g filter="url(#grain3)"><circle cx="257" cy="693" r="52" fill="url(#headG0)"/></g>
<circle cx="257" cy="693" r="53" fill="none" stroke="#181818" stroke-width="4" stroke-dasharray="99 600" stroke-dashoffset="86" opacity=".6" filter="url(#b1)"/>
<path d="M254 736Q283 733 300 705" stroke="#f4f4f4" stroke-width="2.5" fill="none" filter="url(#b1)" opacity=".8"/>
<path d="M254 745Q291 741 309 709" stroke="#ffffff" stroke-width="3" fill="none" filter="url(#b1)" opacity=".9"/>
<path d="M284 741.5Q311 731.5 316 708.5" stroke="#383838" stroke-width="6" stroke-linecap="round" fill="none" filter="url(#b1)"/>
<path d="M262 754.0A64 64 0 0 0 330.5 700.5" stroke="#ffffff" stroke-width="5" fill="none" filter="url(#b1)"/>
<path d="M254 627.5A64 64 0 0 1 330 682.5" stroke="#161616" stroke-width="6" fill="none" filter="url(#b2)" opacity=".7"/>
</g></g>
<g clip-path="url(#pc)"><g clip-path="url(#nc1)">
<circle cx="267" cy="1107" r="65" fill="url(#notchG)"/>
<g filter="url(#grain3)"><circle cx="254" cy="1103" r="56" fill="url(#headG1)"/></g>
<circle cx="254" cy="1103" r="57" fill="none" stroke="#181818" stroke-width="4" stroke-dasharray="106 600" stroke-dashoffset="92" opacity=".6" filter="url(#b1)"/>
<path d="M254 1150Q280 1147 301 1115" stroke="#f4f4f4" stroke-width="2.5" fill="none" filter="url(#b1)" opacity=".8"/>
<path d="M254 1159Q288 1155 310 1119" stroke="#ffffff" stroke-width="3" fill="none" filter="url(#b1)" opacity=".9"/>
<path d="M284 1158Q311 1148 316 1125" stroke="#383838" stroke-width="6" stroke-linecap="round" fill="none" filter="url(#b1)"/>
<path d="M262 1170.5A64 64 0 0 0 330.5 1117" stroke="#ffffff" stroke-width="5" fill="none" filter="url(#b1)"/>
<path d="M254 1044A64 64 0 0 1 330 1099" stroke="#161616" stroke-width="6" fill="none" filter="url(#b2)" opacity=".7"/>
</g></g>
<g clip-path="url(#pc)"><circle cx="1135" cy="689.5" r="64.5" fill="url(#cyl)"/></g>
<g clip-path="url(#pc)"><circle cx="1135" cy="1105" r="64.5" fill="url(#cyl2)"/></g>
<rect x="1135.5" y="365" width="9.5" height="1059" fill="url(#rstrip)"/>
<rect x="1135" y="1246" width="10" height="17" fill="#8e8e8e"/><rect x="1135" y="1263" width="10" height="27" fill="#6e6e6e"/><rect x="1135" y="1290" width="10" height="6" fill="#1c1c1c"/>
<circle cx="700" cy="434" r="5.5" fill="#7a7a7a"/><circle cx="700.5" cy="435.5" r="3.2" fill="#f0f0f0"/>
<circle cx="389" cy="1108" r="5.5" fill="#7a7a7a"/><circle cx="389.5" cy="1109.5" r="3.2" fill="#f0f0f0"/>
<circle cx="1022" cy="1110" r="5.5" fill="#7a7a7a"/><circle cx="1022.5" cy="1111.5" r="3.2" fill="#f0f0f0"/>
<ellipse cx="702" cy="355.5" rx="30" ry="29" fill="#070707"/>
<circle cx="488.3" cy="482" r="189.5" fill="url(#hole1)"/>
<g clip-path="url(#h1)">
<path d="M590 326A255 255 0 0 1 514 654L560 700H700V280H600Z" fill="#060606" opacity=".82" filter="url(#b4)"/>
<path d="M574 372L586 396" stroke="#5a5a5a" stroke-width="5" stroke-linecap="round" filter="url(#b1)"/>
<path d="M587 560L574 586" stroke="#a0a0a0" stroke-width="5" stroke-linecap="round" filter="url(#b1)"/>
<path d="M607 600l4 2 3-2 3 1" stroke="#999" stroke-width="1.3" fill="none"/>
</g>
<ellipse cx="613" cy="643" rx="19" ry="8" transform="rotate(-38 613 643)" fill="#f0f0f0" filter="url(#b4)" opacity=".85"/>
<ellipse cx="603" cy="656" rx="8" ry="4" transform="rotate(-38 603 656)" fill="#dcdcdc" filter="url(#b2)" opacity=".7"/>
<circle cx="915.2" cy="481.5" r="189.3" fill="url(#hole2)"/>
<g clip-path="url(#h2)"><path d="M1004 372A332 332 0 0 1 882 655L900 700H1120V280H1010Z" fill="#030303" opacity=".85" filter="url(#b4)"/></g>
<path d="M1020 630Q1035 620 1041 610" stroke="#e8e8e8" stroke-width="5" stroke-linecap="round" fill="none" filter="url(#b1)"/>
<circle cx="891" cy="412" r="1.6" fill="#cfcfcf"/>
<circle cx="747" cy="452" r="1.5" fill="#cfcfcf"/>
<circle cx="883" cy="466" r="1.2" fill="#cfcfcf"/>
<circle cx="954" cy="333" r="1" fill="#cfcfcf"/>
<circle cx="967" cy="527" r="1.3" fill="#cfcfcf"/>
<circle cx="974" cy="366" r="1" fill="#cfcfcf"/>
<path d="M1104 500A189 189 0 0 1 1030 632" stroke="#d0d0d0" stroke-width="1.6" fill="none" opacity=".7"/>
<circle cx="488" cy="897" r="191" fill="#141414"/>
<g clip-path="url(#slotL)"><circle cx="461.5" cy="897" r="226" fill="#1a1a1a"/><circle cx="461.5" cy="897" r="221" fill="none" stroke="#2e2e2e" stroke-width="5"/><circle cx="461.5" cy="897" r="225" fill="none" stroke="#080808" stroke-width="1.5"/></g>
<g clip-path="url(#h3)" filter="url(#grain2)">
<circle cx="488" cy="897" r="191" fill="url(#disk3)"/>
<ellipse cx="430" cy="770" rx="250" ry="100" fill="url(#sg7)" transform="rotate(-20 430 770)"/>
<ellipse cx="470" cy="970" rx="230" ry="120" fill="url(#sg8)"/>
<ellipse cx="650" cy="900" rx="45" ry="130" fill="url(#sg9)"/>
</g>
<path d="M372 760A186 186 0 0 1 540 716" stroke="#4a4a4a" stroke-width="2" fill="none" opacity=".8"/>
<path d="M318 980A186 186 0 0 1 305 860" stroke="#555" stroke-width="3" fill="none" opacity=".6" stroke-dasharray="3 5"/>
<g filter="url(#b15)" opacity=".82">
<circle cx="448.4" cy="810.5" r="10" fill="#161616" stroke="#3e3e3e" stroke-width="2"/>
<circle cx="487.5" cy="810.5" r="10" fill="#424242"/><path d="M478.5 803.5L493.5 799.5" stroke="#8a8a8a" stroke-width="2.5"/>
<rect x="518.7" y="802.5" width="20" height="16.0" rx="3" fill="#5c5c5c" transform="rotate(-12 528.7 810.5)"/>
<circle cx="372" cy="850.6" r="10" fill="#161616" stroke="#484848" stroke-width="2"/>
<circle cx="409.5" cy="850.6" r="11" fill="#707070"/>
<rect x="442.4" y="840.6" width="12" height="20" fill="#686868" transform="rotate(-35 448.4 850.6)"/>
<circle cx="487.5" cy="850.6" r="11" fill="#505050"/>
<rect x="521.5" y="843.4" width="14.4" height="14.4" fill="#080808" transform="rotate(38 528.7 850.6)"/>
<circle cx="566.3" cy="850.6" r="10" fill="#2c2c2c"/><path d="M558.3 856.6L573.3 842.6M562.3 844.6L574.3 856.6" stroke="#5e5e5e" stroke-width="2.5"/>
<circle cx="606.4" cy="850.6" r="11" fill="#161616" stroke="#303030" stroke-width="2"/>
<rect x="363" y="878.4" width="18" height="14.4" rx="3" fill="#585858" transform="rotate(-12 372 885.6)"/>
<circle cx="409.5" cy="885.6" r="10" fill="#161616" stroke="#404040" stroke-width="2"/>
<rect x="439.4" y="878.4" width="18" height="14.4" rx="3" fill="#4a4a4a" transform="rotate(-12 448.4 885.6)"/>
<circle cx="487.5" cy="885.6" r="9" fill="#0c0c0c"/><path d="M478.5 881.6l7 -3 3 8 9 0 -3 9 -8 -1z" fill="#707070"/>
<circle cx="528.7" cy="887.6" r="10" fill="#101010" stroke="#343434" stroke-width="1.5"/><path d="M519.7 877.6L537.7 880.6L536.7 886.6L520.7 884.6Z" fill="#585858"/>
<circle cx="566.3" cy="885.6" r="10" fill="#0a0a0a"/>
<circle cx="606.4" cy="885.6" r="10" fill="#161616" stroke="#4c4c4c" stroke-width="2"/>
<circle cx="372" cy="921.9" r="10" fill="#0c0c0c"/>
<circle cx="409.5" cy="921.9" r="14" fill="#6c6c6c" stroke="#8e8e8e" stroke-width="3"/>
<rect x="441.2" y="914.6999999999999" width="14.4" height="14.4" fill="#8c8c8c" transform="rotate(38 448.4 921.9)"/>
<circle cx="487.5" cy="921.9" r="11" fill="#808080"/>
<circle cx="528.7" cy="921.9" r="10" fill="#a2a2a2"/>
<circle cx="566.3" cy="921.9" r="10" fill="#0a0a0a"/>
<circle cx="606.4" cy="921.9" r="10" fill="#0b0b0b"/>
<circle cx="372" cy="959.4" r="9" fill="#0d0d0d"/>
<circle cx="409.5" cy="959.4" r="9" fill="#161616" stroke="#303030" stroke-width="2"/>
<circle cx="448.4" cy="959.4" r="10" fill="#161616" stroke="#3a3a3a" stroke-width="2"/>
<circle cx="487.5" cy="959.4" r="10" fill="#484848"/>
<circle cx="528.7" cy="959.4" r="11" fill="#b6b6b6"/>
<rect x="559.9" y="953.0" width="12.8" height="12.8" fill="#404040" transform="rotate(38 566.3 959.4)"/>
<circle cx="606.4" cy="959.4" r="9" fill="#808080"/>
<circle cx="372" cy="997" r="9" fill="#0a0a0a"/>
<circle cx="448.4" cy="997" r="8" fill="#161616" stroke="#262626" stroke-width="2"/>
<rect x="559.9" y="990.6" width="12.8" height="12.8" fill="#5a5a5a" transform="rotate(38 566.3 997)"/>
<rect x="598.4" y="990.6" width="16" height="12.8" rx="3" fill="#484848" transform="rotate(-12 606.4 997)"/>
</g>
<circle cx="355.7" cy="937.8" r="1.3" fill="#6d6d6d" opacity=".7"/>
<circle cx="346.4" cy="890.0" r="0.7" fill="#717171" opacity=".7"/>
<circle cx="375.1" cy="777.0" r="0.7" fill="#606060" opacity=".7"/>
<circle cx="628.2" cy="986.8" r="1.2" fill="#4b4b4b" opacity=".7"/>
<circle cx="668.6" cy="876.7" r="1.1" fill="#797979" opacity=".7"/>
<circle cx="500.4" cy="915.9" r="1.0" fill="#4d4d4d" opacity=".7"/>
<circle cx="521.4" cy="981.6" r="0.6" fill="#6d6d6d" opacity=".7"/>
<circle cx="329.9" cy="959.0" r="1.0" fill="#7b7b7b" opacity=".7"/>
<circle cx="337.4" cy="897.2" r="1.0" fill="#5e5e5e" opacity=".7"/>
<circle cx="672.6" cy="894.2" r="1.3" fill="#818181" opacity=".7"/>
<circle cx="452.7" cy="978.3" r="0.8" fill="#4e4e4e" opacity=".7"/>
<circle cx="499.9" cy="780.5" r="1.3" fill="#676767" opacity=".7"/>
<circle cx="652.4" cy="852.6" r="0.6" fill="#595959" opacity=".7"/>
<circle cx="595.2" cy="829.2" r="1.4" fill="#686868" opacity=".7"/>
<circle cx="619.6" cy="962.0" r="1.2" fill="#5e5e5e" opacity=".7"/>
<circle cx="579.1" cy="952.5" r="1.4" fill="#858585" opacity=".7"/>
<circle cx="555.7" cy="959.0" r="0.7" fill="#4d4d4d" opacity=".7"/>
<circle cx="510.7" cy="822.4" r="1.0" fill="#6c6c6c" opacity=".7"/>
<circle cx="545.6" cy="1044.4" r="0.7" fill="#7b7b7b" opacity=".7"/>
<circle cx="577.3" cy="977.2" r="0.8" fill="#5e5e5e" opacity=".7"/>
<circle cx="651.1" cy="866.9" r="0.8" fill="#8f8f8f" opacity=".7"/>
<circle cx="516.4" cy="1009.6" r="1.3" fill="#7b7b7b" opacity=".7"/>
<circle cx="636.6" cy="1005.5" r="0.8" fill="#5d5d5d" opacity=".7"/>
<circle cx="503.1" cy="792.0" r="0.8" fill="#4e4e4e" opacity=".7"/>
<circle cx="607.2" cy="972.8" r="0.8" fill="#787878" opacity=".7"/>
<circle cx="401.8" cy="986.9" r="1.4" fill="#6f6f6f" opacity=".7"/>
<circle cx="334.3" cy="819.2" r="0.7" fill="#545454" opacity=".7"/>
<circle cx="628.3" cy="805.9" r="0.8" fill="#575757" opacity=".7"/>
<circle cx="476.1" cy="718.0" r="0.8" fill="#949494" opacity=".7"/>
<circle cx="594.1" cy="800.0" r="0.9" fill="#505050" opacity=".7"/>
<circle cx="664.2" cy="940.7" r="0.8" fill="#808080" opacity=".7"/>
<circle cx="480.6" cy="1064.7" r="1.1" fill="#5f5f5f" opacity=".7"/>
<circle cx="558.9" cy="1037.1" r="0.7" fill="#5a5a5a" opacity=".7"/>
<circle cx="328.9" cy="834.8" r="1.1" fill="#5e5e5e" opacity=".7"/>
<circle cx="560.5" cy="855.5" r="0.6" fill="#5e5e5e" opacity=".7"/>
<circle cx="445.1" cy="912.2" r="0.7" fill="#666666" opacity=".7"/>
<circle cx="427.7" cy="867.6" r="0.9" fill="#8f8f8f" opacity=".7"/>
<circle cx="636.8" cy="878.6" r="1.2" fill="#777777" opacity=".7"/>
<circle cx="510.0" cy="923.7" r="0.6" fill="#919191" opacity=".7"/>
<circle cx="432.9" cy="724.0" r="0.6" fill="#7b7b7b" opacity=".7"/>
<circle cx="330.9" cy="914.6" r="0.9" fill="#989898" opacity=".7"/>
<circle cx="609.7" cy="959.3" r="1.2" fill="#909090" opacity=".7"/>
<circle cx="475.4" cy="742.3" r="1.2" fill="#919191" opacity=".7"/>
<circle cx="396.6" cy="1019.8" r="1.3" fill="#8e8e8e" opacity=".7"/>
<circle cx="345.3" cy="978.8" r="1.3" fill="#767676" opacity=".7"/>
<circle cx="407.1" cy="816.1" r="1.1" fill="#797979" opacity=".7"/>
<text x="434" y="1056.5" font-family="'Liberation Sans',sans-serif" font-size="27" fill="#a4a4a4" fill-opacity=".8" textLength="57" lengthAdjust="spacing">MAC</text>
<circle cx="913" cy="897" r="190.5" fill="#0c0c0c"/>
<g clip-path="url(#slotR)"><circle cx="923.5" cy="897" r="217" fill="#0c0c0c"/><circle cx="923.5" cy="897" r="212" fill="none" stroke="#2a2a2a" stroke-width="1.2"/></g>
<g clip-path="url(#h4)" filter="url(#grain2)">
<circle cx="832.2" cy="757.9" r="22.3" fill="#6c6c6c"/><circle cx="832.2" cy="757.9" r="21.2" fill="none" stroke="url(#rimG)" stroke-width="2.4"/>
<circle cx="885.3" cy="757.9" r="22.3" fill="#2e2e2e"/><circle cx="885.3" cy="757.9" r="21.2" fill="none" stroke="url(#rimG)" stroke-width="2.4"/>
<circle cx="937.2" cy="757.9" r="22.3" fill="#0d0d0d"/><circle cx="937.2" cy="757.9" r="21.2" fill="none" stroke="url(#rimG)" stroke-width="2.4"/>
<circle cx="990.3" cy="757.9" r="22.3" fill="#a4a4a4"/><circle cx="990.3" cy="757.9" r="21.2" fill="none" stroke="url(#rimG)" stroke-width="2.4"/>
<circle cx="805" cy="805.3" r="22.3" fill="#323232"/><circle cx="805" cy="805.3" r="21.2" fill="none" stroke="url(#rimG)" stroke-width="2.4"/>
<circle cx="858.1" cy="805.3" r="22.3" fill="#3a3a3a"/><circle cx="858.1" cy="805.3" r="21.2" fill="none" stroke="url(#rimG)" stroke-width="2.4"/>
<circle cx="910" cy="805.3" r="22.3" fill="#404040"/><circle cx="910" cy="805.3" r="21.2" fill="none" stroke="url(#rimG)" stroke-width="2.4"/>
<circle cx="961.8" cy="805.3" r="22.3" fill="#565656"/><circle cx="961.8" cy="805.3" r="21.2" fill="none" stroke="url(#rimG)" stroke-width="2.4"/>
<circle cx="1015" cy="805.3" r="22.3" fill="#0c0c0c"/><circle cx="1015" cy="805.3" r="21.2" fill="none" stroke="url(#rimG)" stroke-width="2.4"/>
<circle cx="776.5" cy="852" r="22.3" fill="#707070"/><circle cx="776.5" cy="852" r="21.2" fill="none" stroke="url(#rimG)" stroke-width="2.4"/>
<circle cx="829.6" cy="852" r="22.3" fill="#a4a4a4"/><circle cx="829.6" cy="852" r="21.2" fill="none" stroke="url(#rimG)" stroke-width="2.4"/>
<circle cx="881.4" cy="852" r="22.3" fill="#1c1c1c"/><circle cx="881.4" cy="852" r="21.2" fill="none" stroke="url(#rimG)" stroke-width="2.4"/>
<circle cx="934.6" cy="852" r="22.3" fill="#141414"/><circle cx="934.6" cy="852" r="21.2" fill="none" stroke="url(#rimG)" stroke-width="2.4"/>
<circle cx="986.4" cy="852" r="22.3" fill="#c4c4c4"/><circle cx="986.4" cy="852" r="21.2" fill="none" stroke="url(#rimG)" stroke-width="2.4"/>
<circle cx="1038.3" cy="852" r="22.3" fill="#707070"/><circle cx="1038.3" cy="852" r="21.2" fill="none" stroke="url(#rimG)" stroke-width="2.4"/>
<circle cx="749.2" cy="897.4" r="22.3" fill="#484848"/><circle cx="749.2" cy="897.4" r="21.2" fill="none" stroke="url(#rimG)" stroke-width="2.4"/>
<circle cx="801.1" cy="897.4" r="22.3" fill="#c6c6c6"/><circle cx="801.1" cy="897.4" r="21.2" fill="none" stroke="url(#rimG)" stroke-width="2.4"/>
<circle cx="854.2" cy="897.4" r="22.3" fill="#262626"/><circle cx="854.2" cy="897.4" r="21.2" fill="none" stroke="url(#rimG)" stroke-width="2.4"/>
<circle cx="906.1" cy="897.4" r="22.3" fill="#555555"/><circle cx="906.1" cy="897.4" r="21.2" fill="none" stroke="url(#rimG)" stroke-width="2.4"/>
<circle cx="959.2" cy="897.4" r="22.3" fill="#222222"/><circle cx="959.2" cy="897.4" r="21.2" fill="none" stroke="url(#rimG)" stroke-width="2.4"/>
<circle cx="1009.7" cy="897.4" r="22.3" fill="#1c1c1c"/><circle cx="1009.7" cy="897.4" r="21.2" fill="none" stroke="url(#rimG)" stroke-width="2.4"/>
<circle cx="1062.9" cy="897.4" r="22.3" fill="#383838"/><circle cx="1062.9" cy="897.4" r="21.2" fill="none" stroke="url(#rimG)" stroke-width="2.4"/>
<circle cx="773.9" cy="944" r="22.3" fill="#1c1c1c"/><circle cx="773.9" cy="944" r="21.2" fill="none" stroke="url(#rimG)" stroke-width="2.4"/>
<circle cx="825.7" cy="944" r="22.3" fill="#101010"/><circle cx="825.7" cy="944" r="21.2" fill="none" stroke="url(#rimG)" stroke-width="2.4"/>
<circle cx="877.6" cy="944" r="22.3" fill="#0b0b0b"/><circle cx="877.6" cy="944" r="21.2" fill="none" stroke="url(#rimG)" stroke-width="2.4"/>
<circle cx="930.7" cy="944" r="22.3" fill="#4a4a4a"/><circle cx="930.7" cy="944" r="21.2" fill="none" stroke="url(#rimG)" stroke-width="2.4"/>
<circle cx="982.5" cy="944" r="22.3" fill="#121212"/><circle cx="982.5" cy="944" r="21.2" fill="none" stroke="url(#rimG)" stroke-width="2.4"/>
<circle cx="1034.4" cy="944" r="22.3" fill="#2e2e2e"/><circle cx="1034.4" cy="944" r="21.2" fill="none" stroke="url(#rimG)" stroke-width="2.4"/>
<circle cx="797.2" cy="990.7" r="22.3" fill="#5c5c5c"/><circle cx="797.2" cy="990.7" r="21.2" fill="none" stroke="url(#rimG)" stroke-width="2.4"/>
<circle cx="850.3" cy="990.7" r="22.3" fill="#141414"/><circle cx="850.3" cy="990.7" r="21.2" fill="none" stroke="url(#rimG)" stroke-width="2.4"/>
<circle cx="902.2" cy="990.7" r="22.3" fill="#1a1a1a"/><circle cx="902.2" cy="990.7" r="21.2" fill="none" stroke="url(#rimG)" stroke-width="2.4"/>
<circle cx="954" cy="990.7" r="22.3" fill="#6e6e6e"/><circle cx="954" cy="990.7" r="21.2" fill="none" stroke="url(#rimG)" stroke-width="2.4"/>
<circle cx="1007.2" cy="990.7" r="22.3" fill="#363636"/><circle cx="1007.2" cy="990.7" r="21.2" fill="none" stroke="url(#rimG)" stroke-width="2.4"/>
<circle cx="821.8" cy="1037.3" r="22.3" fill="#7c7c7c"/><circle cx="821.8" cy="1037.3" r="21.2" fill="none" stroke="url(#rimG)" stroke-width="2.4"/>
<circle cx="873.7" cy="1037.3" r="22.3" fill="#0e0e0e"/><circle cx="873.7" cy="1037.3" r="21.2" fill="none" stroke="url(#rimG)" stroke-width="2.4"/>
<circle cx="926.8" cy="1037.3" r="22.3" fill="#2a2a2a"/><circle cx="926.8" cy="1037.3" r="21.2" fill="none" stroke="url(#rimG)" stroke-width="2.4"/>
<circle cx="980" cy="1037.3" r="22.3" fill="#484848"/><circle cx="980" cy="1037.3" r="21.2" fill="none" stroke="url(#rimG)" stroke-width="2.4"/>
<circle cx="885.3" cy="757.9" r="15" fill="#202020" opacity=".8"/><circle cx="885.3" cy="757.9" r="18" fill="none" stroke="#484848" stroke-width="2" opacity=".8"/>
<circle cx="858.1" cy="805.3" r="13" fill="#262626" opacity=".9" filter="url(#b2)"/><circle cx="858.1" cy="805.3" r="18" fill="none" stroke="#585858" stroke-width="2.5" opacity=".8" filter="url(#b06)"/>
<circle cx="910" cy="805.3" r="12" fill="#363636" opacity=".8" filter="url(#b2)"/>
<circle cx="801.1" cy="897.4" r="11" fill="none" stroke="#dcdcdc" stroke-width="3" filter="url(#b1)"/>
<circle cx="801.1" cy="897.4" r="4" fill="#d8d8d8"/>
<circle cx="906.1" cy="897" r="2.6" fill="#0a0a0a"/>
<circle cx="930.7" cy="944" r="19" fill="none" stroke="#787878" stroke-width="3" filter="url(#b1)"/>
<circle cx="873.7" cy="1037.3" r="19" fill="none" stroke="#2c2c2c" stroke-width="4" filter="url(#b1)"/>
<circle cx="821.8" cy="1040" r="8" fill="#a0a0a0" filter="url(#b2)"/>
<circle cx="959.2" cy="897.4" r="12" fill="#161616" filter="url(#b2)"/><circle cx="959.2" cy="897.4" r="18" fill="none" stroke="#3a3a3a" stroke-width="2.5" filter="url(#b06)"/>
<circle cx="1062.9" cy="899" r="10" fill="#2c2c2c" filter="url(#b2)"/>
<circle cx="817.9" cy="840.6" r="2.3" fill="#808080"/>
<circle cx="821.6" cy="840.7" r="2.3" fill="#d0d0d0"/>
<circle cx="818.9" cy="837.5" r="1.2" fill="#f0f0f0"/>
<circle cx="837.5" cy="843.4" r="1.2" fill="#d0d0d0"/>
<circle cx="838.4" cy="852.7" r="1.4" fill="#f0f0f0"/>
<circle cx="838.7" cy="866.3" r="1.2" fill="#e0e0e0"/>
<circle cx="823.1" cy="854.3" r="2.6" fill="#606060"/>
<circle cx="831.8" cy="860.5" r="2.6" fill="#d0d0d0"/>
<circle cx="825.0" cy="870.1" r="1.9" fill="#808080"/>
<circle cx="823.9" cy="846.2" r="2.5" fill="#d0d0d0"/>
<circle cx="847.2" cy="848.3" r="1.5" fill="#ffffff"/>
<circle cx="813.8" cy="861.4" r="1.4" fill="#ffffff"/>
<circle cx="824.9" cy="866.0" r="1.0" fill="#808080"/>
<circle cx="828.3" cy="847.3" r="1.6" fill="#ffffff"/>
<circle cx="819.0" cy="853.3" r="1.8" fill="#808080"/>
<circle cx="833.9" cy="860.6" r="2.5" fill="#808080"/>
<circle cx="822.0" cy="861.4" r="1.9" fill="#f0f0f0"/>
<circle cx="820.0" cy="862.8" r="1.0" fill="#606060"/>
<circle cx="825.7" cy="837.5" r="2.5" fill="#606060"/>
<circle cx="830.3" cy="833.7" r="2.5" fill="#ffffff"/>
<circle cx="811.7" cy="850.6" r="1.4" fill="#f0f0f0"/>
<circle cx="842.4" cy="862.3" r="2.3" fill="#ffffff"/>
<circle cx="847.6" cy="856.2" r="1.1" fill="#ffffff"/>
<circle cx="818.2" cy="851.1" r="1.2" fill="#ffffff"/>
<circle cx="842.1" cy="845.6" r="1.5" fill="#ffffff"/>
<circle cx="823.7" cy="867.9" r="2.0" fill="#808080"/>
<circle cx="822.5" cy="834.4" r="1.3" fill="#606060"/>
<circle cx="842.5" cy="859.2" r="2.5" fill="#606060"/>
<circle cx="830.8" cy="866.6" r="2.3" fill="#f0f0f0"/>
<circle cx="825.4" cy="846.1" r="2.6" fill="#808080"/>
<circle cx="842.7" cy="854.7" r="2.3" fill="#d0d0d0"/>
<circle cx="843.8" cy="850.3" r="1.2" fill="#f0f0f0"/>
<circle cx="839.4" cy="859.8" r="1.2" fill="#f0f0f0"/>
<circle cx="826.0" cy="864.3" r="2.6" fill="#d0d0d0"/>
<circle cx="842.3" cy="850.1" r="1.8" fill="#808080"/>
<circle cx="825.5" cy="861.1" r="1.8" fill="#d0d0d0"/>
<circle cx="842.7" cy="863.2" r="1.9" fill="#d0d0d0"/>
<circle cx="820.2" cy="842.4" r="1.5" fill="#606060"/>
<circle cx="816.0" cy="852.7" r="1.9" fill="#e0e0e0"/>
<circle cx="818.8" cy="864.9" r="2.2" fill="#808080"/>
<circle cx="987.5" cy="756.2" r="2.1" fill="#f4f4f4" opacity=".85"/>
<circle cx="995.0" cy="749.9" r="3.5" fill="#f4f4f4" opacity=".85"/>
<circle cx="1000.4" cy="755.1" r="1.9" fill="#c0c0c0" opacity=".85"/>
<circle cx="974.7" cy="760.4" r="2.2" fill="#f4f4f4" opacity=".85"/>
<circle cx="974.5" cy="761.7" r="2.8" fill="#f4f4f4" opacity=".85"/>
<circle cx="982.0" cy="769.7" r="3.0" fill="#e0e0e0" opacity=".85"/>
<circle cx="980.6" cy="771.3" r="3.2" fill="#e0e0e0" opacity=".85"/>
<circle cx="1007.7" cy="755.3" r="2.5" fill="#ffffff" opacity=".85"/>
<circle cx="993.7" cy="768.2" r="3.2" fill="#f4f4f4" opacity=".85"/>
<circle cx="984.8" cy="743.7" r="3.0" fill="#ffffff" opacity=".85"/>
<circle cx="977.4" cy="746.2" r="2.5" fill="#e0e0e0" opacity=".85"/>
<circle cx="986.0" cy="770.6" r="3.2" fill="#f4f4f4" opacity=".85"/>
<circle cx="989.7" cy="755.0" r="1.8" fill="#e0e0e0" opacity=".85"/>
<circle cx="984.9" cy="752.5" r="3.0" fill="#ffffff" opacity=".85"/>
<circle cx="987.8" cy="755.2" r="2.4" fill="#ffffff" opacity=".85"/>
<circle cx="998.9" cy="772.6" r="1.7" fill="#ffffff" opacity=".85"/>
<circle cx="977.1" cy="759.4" r="2.3" fill="#f4f4f4" opacity=".85"/>
<circle cx="980.0" cy="767.5" r="2.7" fill="#ffffff" opacity=".85"/>
<circle cx="988.1" cy="747.1" r="2.2" fill="#f4f4f4" opacity=".85"/>
<circle cx="1000.6" cy="744.7" r="2.9" fill="#f4f4f4" opacity=".85"/>
<circle cx="1003.3" cy="754.9" r="2.1" fill="#f4f4f4" opacity=".85"/>
<circle cx="980.2" cy="755.0" r="2.7" fill="#f4f4f4" opacity=".85"/>
<circle cx="991.3" cy="841.4" r="3.6" fill="#e4e4e4" opacity=".7"/>
<circle cx="979.4" cy="853.4" r="2.8" fill="#c0c0c0" opacity=".7"/>
<circle cx="1003.5" cy="847.3" r="3.2" fill="#e4e4e4" opacity=".7"/>
<circle cx="992.7" cy="838.8" r="2.8" fill="#e4e4e4" opacity=".7"/>
<circle cx="973.5" cy="846.3" r="2.3" fill="#c0c0c0" opacity=".7"/>
<circle cx="970.3" cy="859.7" r="3.0" fill="#c0c0c0" opacity=".7"/>
<circle cx="997.3" cy="850.1" r="3.9" fill="#d8d8d8" opacity=".7"/>
<circle cx="978.8" cy="846.8" r="4.0" fill="#c0c0c0" opacity=".7"/>
<circle cx="986.4" cy="854.5" r="3.9" fill="#e4e4e4" opacity=".7"/>
<circle cx="976.8" cy="852.5" r="3.0" fill="#b0b0b0" opacity=".7"/>
<circle cx="976.9" cy="837.1" r="2.5" fill="#b0b0b0" opacity=".7"/>
<circle cx="989.6" cy="836.0" r="2.0" fill="#e4e4e4" opacity=".7"/>
<circle cx="986.9" cy="864.4" r="2.1" fill="#c0c0c0" opacity=".7"/>
<circle cx="985.6" cy="859.0" r="4.0" fill="#e4e4e4" opacity=".7"/>
<circle cx="968.5" cy="852.9" r="3.0" fill="#b0b0b0" opacity=".7"/>
<circle cx="992.8" cy="852.6" r="2.6" fill="#e4e4e4" opacity=".7"/>
<circle cx="974.8" cy="841.9" r="2.1" fill="#e4e4e4" opacity=".7"/>
<circle cx="976.4" cy="863.9" r="3.2" fill="#b0b0b0" opacity=".7"/>
<ellipse cx="986" cy="764" rx="11" ry="9" fill="#fff" filter="url(#b2)" opacity=".9"/>
<path d="M1034 800A21 21 0 0 1 1012 826" stroke="#e0e0e0" stroke-width="4" fill="none" filter="url(#b1)"/>
<path d="M997 795A21 21 0 0 1 1010 785" stroke="#999" stroke-width="2" fill="none"/>
<path d="M780 985L815 1000" stroke="#aaa" stroke-width="1.5"/><path d="M782 992L812 1005" stroke="#999" stroke-width="1"/>
</g>
<path d="M908 721l3 6m3-7v7m10-10q-4 8 2 12m8-13v14m-4-14h8m6 0q8 2 2 12" stroke="#3c3c3c" stroke-width="1.6" fill="none"/>
<path d="M1103 925A190 190 0 0 1 1076 995" stroke="#e0e0e0" stroke-width="2" fill="none" filter="url(#b1)"/>
<path d="M1076 995A190 190 0 0 1 1005 1063" stroke="#f4f4f4" stroke-width="4" fill="none" filter="url(#b1)"/>
<g clip-path="url(#pc)">
<g filter="url(#grain2)"><circle cx="487" cy="1315" r="190" fill="#131313"/></g>
<circle cx="487" cy="1315" r="185" fill="none" stroke="#080808" stroke-width="10" opacity=".6" filter="url(#b2)"/>
<path d="M679 1330A190 190 0 0 1 590 1478" stroke="#f0f0f0" stroke-width="3.5" fill="none" filter="url(#b1)"/>
<g filter="url(#b06)">
<circle cx="413.4" cy="1171.6" r="15.5" fill="#0a0a0a" stroke="#303030" stroke-width="1.5"/>
<path d="M399.9 1177.6A15 15 0 0 0 426.9 1177.6" stroke="#e6e6e6" stroke-width="3" fill="none" filter="url(#b1)"/>
<path d="M417.4 1158.6A14 14 0 0 1 426.4 1173.6" stroke="#6a6a6a" stroke-width="5" fill="none" filter="url(#b2)"/>
<circle cx="461.4" cy="1171.6" r="15.5" fill="#0a0a0a" stroke="#303030" stroke-width="1.5"/>
<path d="M447.9 1177.6A15 15 0 0 0 474.9 1177.6" stroke="#e6e6e6" stroke-width="3" fill="none" filter="url(#b1)"/>
<path d="M465.4 1158.6A14 14 0 0 1 474.4 1173.6" stroke="#6a6a6a" stroke-width="5" fill="none" filter="url(#b2)"/>
<circle cx="509.3" cy="1171.6" r="15.5" fill="#0a0a0a" stroke="#303030" stroke-width="1.5"/>
<path d="M495.8 1177.6A15 15 0 0 0 522.8 1177.6" stroke="#e6e6e6" stroke-width="3" fill="none" filter="url(#b1)"/>
<path d="M513.3 1158.6A14 14 0 0 1 522.3 1173.6" stroke="#6a6a6a" stroke-width="5" fill="none" filter="url(#b2)"/>
<circle cx="556.8" cy="1171.6" r="15.5" fill="#0a0a0a" stroke="#303030" stroke-width="1.5"/>
<path d="M543.3 1177.6A15 15 0 0 0 570.3 1177.6" stroke="#e6e6e6" stroke-width="3" fill="none" filter="url(#b1)"/>
<path d="M560.8 1158.6A14 14 0 0 1 569.8 1173.6" stroke="#6a6a6a" stroke-width="5" fill="none" filter="url(#b2)"/>
<circle cx="413.4" cy="1452.9" r="15.5" fill="#0a0a0a" stroke="#303030" stroke-width="1.5"/>
<path d="M399.9 1458.9A15 15 0 0 0 426.9 1458.9" stroke="#e6e6e6" stroke-width="3" fill="none" filter="url(#b1)"/>
<path d="M417.4 1439.9A14 14 0 0 1 426.4 1454.9" stroke="#6a6a6a" stroke-width="5" fill="none" filter="url(#b2)"/>
<circle cx="461.4" cy="1452.9" r="16" fill="#585858"/><circle cx="461.4" cy="1452.9" r="8" fill="#0c0c0c"/>
<circle cx="509.3" cy="1452.9" r="15.5" fill="#0a0a0a" stroke="#303030" stroke-width="1.5"/>
<path d="M495.8 1458.9A15 15 0 0 0 522.8 1458.9" stroke="#e6e6e6" stroke-width="3" fill="none" filter="url(#b1)"/>
<path d="M513.3 1439.9A14 14 0 0 1 522.3 1454.9" stroke="#6a6a6a" stroke-width="5" fill="none" filter="url(#b2)"/>
<circle cx="556.8" cy="1452.9" r="15.5" fill="#0a0a0a" stroke="#303030" stroke-width="1.5"/>
<path d="M543.3 1458.9A15 15 0 0 0 570.3 1458.9" stroke="#e6e6e6" stroke-width="3" fill="none" filter="url(#b1)"/>
<path d="M560.8 1439.9A14 14 0 0 1 569.8 1454.9" stroke="#6a6a6a" stroke-width="5" fill="none" filter="url(#b2)"/>
<path d="M473.4 1448.9A14 14 0 0 1 461.4 1467.9" stroke="#ddd" stroke-width="2.5" fill="none" filter="url(#b1)"/>
<circle cx="366.8" cy="1218.3" r="15.5" fill="#0a0a0a" stroke="#303030" stroke-width="1.5"/>
<path d="M353.3 1224.3A15 15 0 0 0 380.3 1224.3" stroke="#e6e6e6" stroke-width="3" fill="none" filter="url(#b1)"/>
<path d="M370.8 1205.3A14 14 0 0 1 379.8 1220.3" stroke="#6a6a6a" stroke-width="5" fill="none" filter="url(#b2)"/>
<circle cx="366.8" cy="1312.9" r="15.5" fill="#0a0a0a" stroke="#303030" stroke-width="1.5"/>
<path d="M353.3 1318.9A15 15 0 0 0 380.3 1318.9" stroke="#e6e6e6" stroke-width="3" fill="none" filter="url(#b1)"/>
<path d="M370.8 1299.9A14 14 0 0 1 379.8 1314.9" stroke="#6a6a6a" stroke-width="5" fill="none" filter="url(#b2)"/>
<circle cx="366.8" cy="1406.2" r="15.5" fill="#0a0a0a" stroke="#303030" stroke-width="1.5"/>
<path d="M353.3 1412.2A15 15 0 0 0 380.3 1412.2" stroke="#e6e6e6" stroke-width="3" fill="none" filter="url(#b1)"/>
<path d="M370.8 1393.2A14 14 0 0 1 379.8 1408.2" stroke="#6a6a6a" stroke-width="5" fill="none" filter="url(#b2)"/>
<circle cx="509.3" cy="1218.3" r="16.5" fill="#848484"/><circle cx="509.3" cy="1218.3" r="7.2" fill="#101010"/>
<circle cx="556.8" cy="1218.3" r="16.5" fill="#848484"/><circle cx="556.8" cy="1218.3" r="7.2" fill="#101010"/>
<circle cx="603.9" cy="1218.3" r="16.5" fill="#848484"/><circle cx="603.9" cy="1218.3" r="7.2" fill="#101010"/>
<circle cx="509.3" cy="1265" r="16.5" fill="#848484"/><circle cx="509.3" cy="1265" r="7.2" fill="#101010"/>
<circle cx="556.8" cy="1265" r="16.5" fill="#848484"/><circle cx="556.8" cy="1265" r="7.2" fill="#101010"/>
<circle cx="603.9" cy="1265" r="16.5" fill="#848484"/><circle cx="603.9" cy="1265" r="7.2" fill="#101010"/>
<circle cx="509.3" cy="1312.9" r="16.5" fill="#848484"/><circle cx="509.3" cy="1312.9" r="7.2" fill="#101010"/>
<circle cx="603.9" cy="1312.9" r="16.5" fill="#848484"/><circle cx="603.9" cy="1312.9" r="7.2" fill="#101010"/>
<circle cx="509.3" cy="1359.6" r="16.5" fill="#848484"/><circle cx="509.3" cy="1359.6" r="7.2" fill="#101010"/>
<circle cx="556.8" cy="1359.6" r="16.5" fill="#848484"/><circle cx="556.8" cy="1359.6" r="7.2" fill="#101010"/>
<circle cx="603.9" cy="1359.6" r="16.5" fill="#848484"/><circle cx="603.9" cy="1359.6" r="7.2" fill="#101010"/>
<circle cx="509.3" cy="1406.2" r="16.5" fill="#848484"/><circle cx="509.3" cy="1406.2" r="7.2" fill="#101010"/>
<circle cx="556.8" cy="1406.2" r="16.5" fill="#848484"/><circle cx="556.8" cy="1406.2" r="7.2" fill="#101010"/>
<circle cx="603.9" cy="1406.2" r="16.5" fill="#848484"/><circle cx="603.9" cy="1406.2" r="7.2" fill="#101010"/>
<circle cx="461.4" cy="1218.3" r="16.5" fill="#848484"/><circle cx="461.4" cy="1218.3" r="7.2" fill="#101010"/>
<circle cx="461.4" cy="1406.2" r="16.5" fill="#848484"/><circle cx="461.4" cy="1406.2" r="7.2" fill="#101010"/>
<circle cx="413.4" cy="1265" r="16.5" fill="#5a5a5a"/><circle cx="413.4" cy="1265" r="7.5" fill="#0a0a0a"/>
<circle cx="413.4" cy="1359.6" r="14" fill="#484848"/><circle cx="413.4" cy="1359.6" r="6" fill="#101010"/>
<circle cx="463.4" cy="1271" r="29" fill="#2e2e2e"/><circle cx="463.4" cy="1271" r="22" fill="none" stroke="#444444" stroke-width="2"/>
<rect x="451.4" y="1259" width="22" height="24" fill="#0a0a0a"/>
<circle cx="461.4" cy="1363.6" r="29" fill="#2c2c2c"/>
<path d="M435.4 1373.6A29 29 0 0 0 488.4 1373.6Z" fill="#6a6a6a" filter="url(#b2)"/>
<circle cx="461.4" cy="1357.6" r="15" fill="#6c6c6c"/><circle cx="461.4" cy="1357.6" r="7" fill="#383838"/>
<circle cx="461.4" cy="1312.9" r="17" fill="#666666"/><circle cx="461.4" cy="1312.9" r="8" fill="#c4c4c4"/>
<circle cx="556.8" cy="1314.9" r="15" fill="#303030" stroke="#8a8a8a" stroke-width="1.5"/>
<path d="M557.8 1310.9l6-20" stroke="#f4f4f4" stroke-width="7" stroke-linecap="round" filter="url(#b1)"/>
<rect x="551.8" y="1212.3" width="9" height="13" fill="#2a2a2a"/>
<rect x="596.9" y="1399.2" width="14" height="14" rx="3" fill="#0c0c0c"/>
<g filter="url(#grain)">
<circle cx="413.4" cy="1219.3" r="27" fill="#c8c8c8"/>
<circle cx="413.4" cy="1219.3" r="22" fill="none" stroke="#909090" stroke-width="2"/>
<circle cx="366.8" cy="1265" r="30" fill="#d6d6d6"/>
<circle cx="366.8" cy="1265" r="25" fill="none" stroke="#9e9e9e" stroke-width="2"/>
<circle cx="413.4" cy="1310.9" r="30" fill="#dcdcdc"/>
<circle cx="413.4" cy="1310.9" r="25" fill="none" stroke="#a4a4a4" stroke-width="2"/>
<circle cx="413.4" cy="1406.2" r="29" fill="#e4e4e4"/>
<circle cx="413.4" cy="1406.2" r="24" fill="none" stroke="#acacac" stroke-width="2"/>
</g>
<ellipse cx="407.4" cy="1210.3" rx="16" ry="12" fill="url(#sg10)" transform="rotate(-30 407.4 1210.3)"/>
<ellipse cx="417.4" cy="1232.3" rx="20" ry="9" fill="url(#sg11)"/>
<ellipse cx="356.8" cy="1277" rx="14" ry="10" fill="url(#sg12)"/>
<ellipse cx="378.8" cy="1253" rx="12" ry="10" fill="url(#sg13)"/>
<ellipse cx="352.8" cy="1259" rx="10" ry="16" fill="url(#sg14)"/>
<ellipse cx="423.4" cy="1322.9" rx="14" ry="10" fill="url(#sg15)"/>
<ellipse cx="401.4" cy="1302.9" rx="12" ry="12" fill="url(#sg16)"/>
<ellipse cx="411.4" cy="1426.2" rx="22" ry="8" fill="url(#sg17)"/>
<path d="M397.4 1232.3A27 27 0 0 0 437.4 1230.3L427.4 1212.3Z" fill="#f6f6f6" opacity=".8" filter="url(#b2)"/>
<path d="M415.4 1200.3l6 24m4-26l5 22" stroke="#8a8a8a" stroke-width="3" filter="url(#b1)"/>
<rect x="361.8" y="1248" width="11" height="30" fill="#0a0a0a" transform="rotate(14 366.8 1265)"/>
<path d="M404.4 1306.9l12-12 8 22-22 2z" fill="#4a4a4a"/><path d="M409.4 1308.9l8-8 4 12z" fill="#1c1c1c"/>
<rect x="400.4" y="1389.2" width="24" height="34" rx="3" fill="#6c6c6c" stroke="#fafafa" stroke-width="2.5"/>
<rect x="405.4" y="1394.2" width="13" height="14" fill="#3a3a3a"/>
<circle cx="368.8" cy="1359.6" r="29.5" fill="#3a3a3a" stroke="#5a5a5a" stroke-width="2"/>
<circle cx="368.8" cy="1359.6" r="21" fill="#1a1a1a" stroke="#9a9a9a" stroke-width="3"/>
<circle cx="368.8" cy="1357.6" r="11" fill="#060606"/>
<path d="M341.8 1345.6q-6 14 2 30q8 10 10 16" stroke="#f2f2f2" stroke-width="7" fill="none" stroke-linecap="round" filter="url(#b1)"/>
<circle cx="355.8" cy="1355.6" r="6" fill="#e8e8e8" filter="url(#b1)"/>
<path d="M428 1280q10-14 20-12q6-10 12-2q2 8-6 12q-4 10-14 8q-10 2-12-6z" fill="#f4f4f4" filter="url(#b1)"/>
<path d="M420 1372q8-8 16-2q4 8-4 14q-10 4-14-4z" fill="#e8e8e8" filter="url(#b1)"/>
<ellipse cx="492" cy="1406" rx="13" ry="15" fill="#f8f8f8" filter="url(#b1)"/>
<circle cx="512.3" cy="1405.2" r="7" fill="#8a8a8a"/>
</g>
</g>
<defs><clipPath id="h6"><circle cx="912" cy="1315" r="189"/></clipPath></defs>
<g clip-path="url(#pc)">
<circle cx="912" cy="1315" r="190.5" fill="#6a6a6a"/>
<g clip-path="url(#h6)"><g filter="url(#grain)">
<circle cx="912" cy="1315" r="189" fill="url(#metal)"/>
<ellipse cx="760" cy="1330" rx="80" ry="200" fill="url(#sg18)"/>
<ellipse cx="900" cy="1475" rx="190" ry="55" fill="url(#sg19)"/>
<ellipse cx="1062" cy="1300" rx="60" ry="160" fill="url(#sg20)"/>
<ellipse cx="900" cy="1190" rx="160" ry="70" fill="url(#sg21)"/>
<ellipse cx="800" cy="1420" rx="75" ry="75" fill="url(#sg22)"/>
</g>
<circle cx="912" cy="1315" r="70" fill="none" stroke="#8c8c8c" stroke-width="1.4" opacity=".3"/>
<circle cx="912" cy="1315" r="79" fill="none" stroke="#d0d0d0" stroke-width="1.4" opacity=".3"/>
<circle cx="912" cy="1315" r="88" fill="none" stroke="#8c8c8c" stroke-width="1.4" opacity=".3"/>
<circle cx="912" cy="1315" r="97" fill="none" stroke="#d0d0d0" stroke-width="1.4" opacity=".3"/>
<circle cx="912" cy="1315" r="106" fill="none" stroke="#8c8c8c" stroke-width="1.4" opacity=".3"/>
<circle cx="912" cy="1315" r="115" fill="none" stroke="#d0d0d0" stroke-width="1.4" opacity=".3"/>
<circle cx="912" cy="1315" r="124" fill="none" stroke="#8c8c8c" stroke-width="1.4" opacity=".3"/>
<circle cx="912" cy="1315" r="133" fill="none" stroke="#d0d0d0" stroke-width="1.4" opacity=".3"/>
<circle cx="912" cy="1315" r="142" fill="none" stroke="#8c8c8c" stroke-width="1.4" opacity=".3"/>
<circle cx="912" cy="1315" r="151" fill="none" stroke="#d0d0d0" stroke-width="1.4" opacity=".3"/>
<circle cx="912" cy="1315" r="160" fill="none" stroke="#8c8c8c" stroke-width="1.4" opacity=".3"/>
<circle cx="912" cy="1315" r="169" fill="none" stroke="#d0d0d0" stroke-width="1.4" opacity=".3"/>
<circle cx="912" cy="1315" r="178" fill="none" stroke="#8c8c8c" stroke-width="1.4" opacity=".3"/>
</g>
<path d="M860 1133A189 189 0 0 1 1006 1151" stroke="#5a5a5a" stroke-width="2" fill="none" opacity=".9"/>
<path d="M1006 1151A189 189 0 0 1 1096 1360" stroke="#343434" stroke-width="3.8" fill="none" opacity=".92" filter="url(#b06)"/>
<path d="M1096 1360A189 189 0 0 1 960 1498" stroke="#e8e8e8" stroke-width="3" fill="none" filter="url(#b1)"/>
<path d="M726 1290A190.5 190.5 0 0 1 870 1129" stroke="#4c4c4c" stroke-width="1.6" fill="none" opacity=".85"/>
<path d="M731 1262A187 187 0 0 1 850 1139" stroke="#dedede" stroke-width="2.2" fill="none" filter="url(#b1)"/>
<path d="M727 1350A189 189 0 0 0 820 1480" stroke="#d4d4d4" stroke-width="2" fill="none" filter="url(#b1)" opacity=".8"/>
<circle cx="838.7" cy="1288.5" r="66.2" fill="#cfcfcf"/>
<circle cx="838.7" cy="1288.5" r="66.2" fill="none" stroke="#5c5c5c" stroke-width="1.2"/>
<circle cx="838.7" cy="1288.5" r="64" fill="#1d1d1d"/>
<circle cx="968" cy="1268.8" r="65.7" fill="#cfcfcf"/>
<circle cx="968" cy="1268.8" r="65.7" fill="none" stroke="#5c5c5c" stroke-width="1.2"/>
<circle cx="968" cy="1268.8" r="63.5" fill="#0d0d0d"/>
<circle cx="920.3" cy="1388" r="65.7" fill="#cfcfcf"/>
<circle cx="920.3" cy="1388" r="65.7" fill="none" stroke="#5c5c5c" stroke-width="1.2"/>
<circle cx="920.3" cy="1388" r="63.5" fill="#0b0b0b"/>
<path d="M795 1256l26 12" stroke="#5a5a5a" stroke-width="1.5"/><path d="M848 1325l-1 12" stroke="#666" stroke-width="1.5"/>
<path d="M926 1248l14 22" stroke="#2c2c2c" stroke-width="2" filter="url(#b1)"/>
<circle cx="892" cy="1398" r="2" fill="#bbb"/><circle cx="822" cy="1236" r="1.3" fill="#888"/>
</g>
<g fill="#11913c"><rect x="693.6" y="860.3" width="8.5" height="26.1"/><rect x="693.6" y="907.9" width="8.5" height="26.1"/><rect x="661" y="893.2" width="26.3" height="8.4"/><rect x="709" y="893.2" width="26" height="8.4"/></g>
</svg>
<span class="t" id="t1a" style="left:33.91px;top:20px;letter-spacing:0.705px;color:#b0b0af">Vacuum</span>
<span class="t" id="t1b" style="left:190.52px;top:20px;letter-spacing:0.766px;color:#b0b0af">Synoptic</span>
<span class="t" id="t2a" style="left:381.09px;top:20px;letter-spacing:1.235px;color:#b0b0af">Beam</span>
<span class="t" id="t2b" style="left:494.82px;top:20px;letter-spacing:0.766px;color:#b0b0af">Synoptic</span>
<span class="t" id="t3" style="left:691.32px;top:20px;letter-spacing:1.478px;color:#b0b0af">Stage/Roller</span>
<span class="t" id="t4a" style="left:964.43px;top:20px;letter-spacing:-3.299px;color:#b0b0af">WDS</span>
<span class="t" id="t4b" style="left:1064.95px;top:20px;letter-spacing:0.622px;color:#b0b0af">Curves</span>
<span class="t" id="t5a" style="left:1233.92px;top:20px;letter-spacing:0.811px;color:#b0b0af">Specimen</span>
<span class="t" id="t5b" style="left:1425.11px;top:20px;letter-spacing:1.648px;color:#b0b0af">Infos</span>
<span class="t" id="t6a" style="left:1559.82px;top:20px;letter-spacing:0.835px;color:#3c3c3e">Sample</span>
<span class="t" id="t6b" style="left:1710.39px;top:20px;letter-spacing:1.400px;color:#3c3c3e">Navigator</span>
<span class="t" id="name" style="left:459.59px;top:140px;letter-spacing:0.802px;color:#3c3c3e">Name</span>
<span class="t" id="ho6" style="left:621.77px;top:140px;letter-spacing:0.593px;color:#3c3c3e">ho6</span>
<span class="t" id="calib" style="left:1572.35px;top:141px;letter-spacing:1.243px;color:#3c3c3e">Calibrate</span>
<span class="t" id="gb1" style="left:1416.31px;top:249px;letter-spacing:0.771px;color:#3c3c3e">Image</span>
<span class="t" id="gb2" style="left:1534.47px;top:249px;letter-spacing:1.224px;color:#3c3c3e">reference</span>
<span class="t" id="point" style="left:1416.39px;top:379px;letter-spacing:0.935px;color:#3c3c3e">Point</span>
<span class="t" id="b1" style="left:1570.20px;top:382px;letter-spacing:0.000px;color:#3c3c3e;transform:scaleX(0.691);transform-origin:11.00px 50%">1</span>
<span class="t" id="b2" style="left:1650.71px;top:382px;letter-spacing:0.000px;color:#3c3c3e;transform:scaleX(0.955);transform-origin:10.49px 50%">2</span>
<span class="t" id="b3" style="left:1724.76px;top:382px;letter-spacing:0.000px;color:#3c3c3e;transform:scaleX(0.956);transform-origin:10.44px 50%">3</span>
<span class="t" id="hAxis" style="left:1441.54px;top:511px;letter-spacing:0.774px;color:#3c3c3e">Axis</span>
<span class="t" id="hStage" style="left:1621.52px;top:511px;letter-spacing:0.219px;color:#3c3c3e">Stage</span>
<span class="t" id="hImage" style="left:1776.11px;top:511px;letter-spacing:1.046px;color:#3c3c3e">Image</span>
<span class="t" id="cX" style="left:1423.12px;top:584px;letter-spacing:0.000px;color:#3c3c3e;transform:scaleX(0.883);transform-origin:12.53px 50%">X</span>
<span class="t" id="cY" style="left:1422.23px;top:652px;letter-spacing:0.000px;color:#3c3c3e;transform:scaleX(0.842);transform-origin:12.52px 50%">Y</span>
<span class="t" id="cZ" style="left:1423.79px;top:721px;letter-spacing:0.000px;color:#3c3c3e;transform:scaleX(0.835);transform-origin:11.51px 50%">Z</span>
<span class="t" id="v742" style="left:1610.52px;top:584px;letter-spacing:1.283px;color:#3c3c3e">-742</span>
<span class="t" id="v297" style="left:1766.72px;top:584px;letter-spacing:1.050px;color:#3c3c3e">-297</span>
<span class="t" id="v836" style="left:1609.94px;top:652px;letter-spacing:-0.389px;color:#3c3c3e">836</span>
<span class="t" id="v209" style="left:1766.72px;top:652px;letter-spacing:0.957px;color:#3c3c3e">-209</span>
<span class="t" id="v0" style="left:1609.51px;top:721px;letter-spacing:0.000px;color:#3c3c3e;transform:scaleX(0.923);transform-origin:10.49px 50%">0</span>
<span class="t" id="move" style="left:1455.99px;top:861px;letter-spacing:-0.242px;color:#3c3c3e">Move</span>
<span class="t" id="to" style="left:1557.90px;top:861px;letter-spacing:-0.076px;color:#3c3c3e">To</span>
<span class="t" id="update" style="left:1724.17px;top:861px;letter-spacing:0.807px;color:#3c3c3e">Update</span>
<span class="t" id="ok" style="left:1501.83px;top:1105px;letter-spacing:-4.625px;color:#8a8a88">OK</span>
<span class="t" id="cancel" style="left:1727.15px;top:1105px;letter-spacing:0.665px;color:#8a8a88">Cancel</span>
</body></html>
